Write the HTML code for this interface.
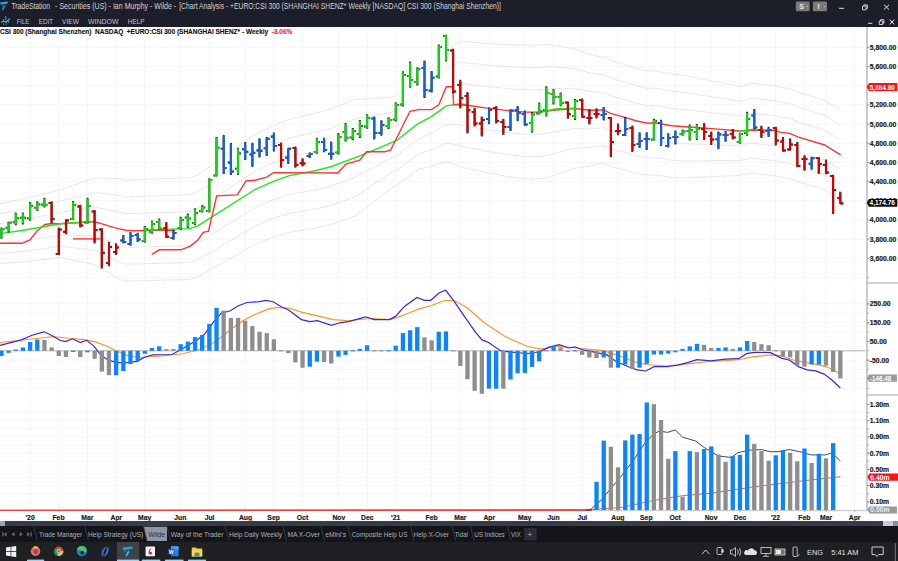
<!DOCTYPE html><html><head><meta charset="utf-8"><style>
html,body{margin:0;padding:0;width:898px;height:561px;overflow:hidden;background:#fff}
svg{display:block;position:absolute;left:0;top:0}
text{font-family:"Liberation Sans",sans-serif}
</style></head><body>
<svg width="898" height="561" viewBox="0 0 898 561">

<rect x="0" y="0" width="898" height="27" fill="#1c1e29"/>
<path d="M0.2,2.2 L8.4,1.5 Q8,3.6 6,4.2 L0.6,4.6 Z" fill="#1c9fe6"/><path d="M4.6,5 Q5.6,7.5 2,11.2 Q2.2,8 4.6,5 Z" fill="#22c3e6"/><path d="M0.6,4.6 Q2,6 2.3,7.2 L3,6 Z" fill="#1a8fd8"/>
<text x="11.4" y="8.8" font-size="8.3" fill="#d4d4da" textLength="38.7" lengthAdjust="spacingAndGlyphs">TradeStation</text>
<text x="55.1" y="8.8" font-size="8.3" fill="#d4d4da" textLength="121.1" lengthAdjust="spacingAndGlyphs">- Securities (US) - Ian Murphy - Wilde -</text>
<text x="179.2" y="8.8" font-size="8.3" fill="#d4d4da" textLength="167.1" lengthAdjust="spacingAndGlyphs">[Chart Analysis - +EURO:CSI 300 (SHANGHAI SHENZ*</text>
<text x="348.6" y="8.8" font-size="8.3" fill="#d4d4da" textLength="152.4" lengthAdjust="spacingAndGlyphs">Weekly [NASDAQ] CSI 300 (Shanghai Shenzhen)]</text>
<path d="M5.8,16 V20.5 M3.3,19.3 v1.6 M8.6,21 v1.6 M3.6,23.4 v1.3 M6,23.5 v1.3" stroke="#1e8fe0" stroke-width="1.3"/><path d="M1.2,22.6 L3.6,21.2 L6,22.2 L9.8,18.6" stroke="#3fd0a0" stroke-width="1.2" fill="none"/>
<text x="16.7" y="24.1" font-size="8.1" fill="#c4c4ca" textLength="12.5" lengthAdjust="spacingAndGlyphs">FILE</text>
<text x="38.8" y="24.1" font-size="8.1" fill="#c4c4ca" textLength="14.3" lengthAdjust="spacingAndGlyphs">EDIT</text>
<text x="62.1" y="24.1" font-size="8.1" fill="#c4c4ca" textLength="16.7" lengthAdjust="spacingAndGlyphs">VIEW</text>
<text x="88" y="24.1" font-size="8.1" fill="#c4c4ca" textLength="30.6" lengthAdjust="spacingAndGlyphs">WINDOW</text>
<text x="127.8" y="24.1" font-size="8.1" fill="#c4c4ca" textLength="16.7" lengthAdjust="spacingAndGlyphs">HELP</text>
<rect x="795.8" y="1.6" width="13.8" height="9.6" rx="1" fill="#7a7a7a"/><text x="799.3" y="9.2" font-size="7" font-weight="bold" fill="#e8e8e8">S</text><circle cx="807.3" cy="6.4" r="0.5" fill="#ddd"/>
<rect x="812.9" y="1.6" width="14.1" height="9.6" rx="1" fill="#7a7a7a"/><text x="817.5" y="9.2" font-size="7" font-weight="bold" fill="#e8e8e8">I</text><circle cx="824.6" cy="6.4" r="0.5" fill="#ddd"/>
<path d="M839,8.3 H844" stroke="#e0e0e0" stroke-width="1"/>
<path d="M862.5,6.2 h3.6 v3.6 h-3.6 z M863.8,6.2 v-1.3 h3.6 v3.6 h-1.3" stroke="#e0e0e0" stroke-width="0.9" fill="none"/>
<path d="M884,4.8 L889,9.6 M889,4.8 L884,9.6" stroke="#e8e8e8" stroke-width="1"/>
<path d="M868,23.3 H872.3" stroke="#e0e0e0" stroke-width="1"/>
<path d="M879.3,21 h3.4 v3.5 h-3.4 z M880.5,21 v-1.3 h3.4 v3.5 h-1.2" stroke="#e0e0e0" stroke-width="0.9" fill="none"/>
<path d="M889.8,19.6 L894.3,24.4 M894.3,19.6 L889.8,24.4" stroke="#e8e8e8" stroke-width="1"/>
<rect x="0" y="27" width="898" height="494" fill="#ffffff"/>
<line x1="30.1" y1="28" x2="30.1" y2="282" stroke="#f6f6f6" stroke-width="1"/>
<line x1="30.1" y1="290" x2="30.1" y2="394" stroke="#f6f6f6" stroke-width="1"/>
<line x1="30.1" y1="402" x2="30.1" y2="510" stroke="#f6f6f6" stroke-width="1"/>
<line x1="58.5" y1="28" x2="58.5" y2="282" stroke="#f6f6f6" stroke-width="1"/>
<line x1="58.5" y1="290" x2="58.5" y2="394" stroke="#f6f6f6" stroke-width="1"/>
<line x1="58.5" y1="402" x2="58.5" y2="510" stroke="#f6f6f6" stroke-width="1"/>
<line x1="87.4" y1="28" x2="87.4" y2="282" stroke="#f6f6f6" stroke-width="1"/>
<line x1="87.4" y1="290" x2="87.4" y2="394" stroke="#f6f6f6" stroke-width="1"/>
<line x1="87.4" y1="402" x2="87.4" y2="510" stroke="#f6f6f6" stroke-width="1"/>
<line x1="116.4" y1="28" x2="116.4" y2="282" stroke="#f6f6f6" stroke-width="1"/>
<line x1="116.4" y1="290" x2="116.4" y2="394" stroke="#f6f6f6" stroke-width="1"/>
<line x1="116.4" y1="402" x2="116.4" y2="510" stroke="#f6f6f6" stroke-width="1"/>
<line x1="144.6" y1="28" x2="144.6" y2="282" stroke="#f6f6f6" stroke-width="1"/>
<line x1="144.6" y1="290" x2="144.6" y2="394" stroke="#f6f6f6" stroke-width="1"/>
<line x1="144.6" y1="402" x2="144.6" y2="510" stroke="#f6f6f6" stroke-width="1"/>
<line x1="180.4" y1="28" x2="180.4" y2="282" stroke="#f6f6f6" stroke-width="1"/>
<line x1="180.4" y1="290" x2="180.4" y2="394" stroke="#f6f6f6" stroke-width="1"/>
<line x1="180.4" y1="402" x2="180.4" y2="510" stroke="#f6f6f6" stroke-width="1"/>
<line x1="209.6" y1="28" x2="209.6" y2="282" stroke="#f6f6f6" stroke-width="1"/>
<line x1="209.6" y1="290" x2="209.6" y2="394" stroke="#f6f6f6" stroke-width="1"/>
<line x1="209.6" y1="402" x2="209.6" y2="510" stroke="#f6f6f6" stroke-width="1"/>
<line x1="245.5" y1="28" x2="245.5" y2="282" stroke="#f6f6f6" stroke-width="1"/>
<line x1="245.5" y1="290" x2="245.5" y2="394" stroke="#f6f6f6" stroke-width="1"/>
<line x1="245.5" y1="402" x2="245.5" y2="510" stroke="#f6f6f6" stroke-width="1"/>
<line x1="273.6" y1="28" x2="273.6" y2="282" stroke="#f6f6f6" stroke-width="1"/>
<line x1="273.6" y1="290" x2="273.6" y2="394" stroke="#f6f6f6" stroke-width="1"/>
<line x1="273.6" y1="402" x2="273.6" y2="510" stroke="#f6f6f6" stroke-width="1"/>
<line x1="302.5" y1="28" x2="302.5" y2="282" stroke="#f6f6f6" stroke-width="1"/>
<line x1="302.5" y1="290" x2="302.5" y2="394" stroke="#f6f6f6" stroke-width="1"/>
<line x1="302.5" y1="402" x2="302.5" y2="510" stroke="#f6f6f6" stroke-width="1"/>
<line x1="338.8" y1="28" x2="338.8" y2="282" stroke="#f6f6f6" stroke-width="1"/>
<line x1="338.8" y1="290" x2="338.8" y2="394" stroke="#f6f6f6" stroke-width="1"/>
<line x1="338.8" y1="402" x2="338.8" y2="510" stroke="#f6f6f6" stroke-width="1"/>
<line x1="367.3" y1="28" x2="367.3" y2="282" stroke="#f6f6f6" stroke-width="1"/>
<line x1="367.3" y1="290" x2="367.3" y2="394" stroke="#f6f6f6" stroke-width="1"/>
<line x1="367.3" y1="402" x2="367.3" y2="510" stroke="#f6f6f6" stroke-width="1"/>
<line x1="395.7" y1="28" x2="395.7" y2="282" stroke="#f6f6f6" stroke-width="1"/>
<line x1="395.7" y1="290" x2="395.7" y2="394" stroke="#f6f6f6" stroke-width="1"/>
<line x1="395.7" y1="402" x2="395.7" y2="510" stroke="#f6f6f6" stroke-width="1"/>
<line x1="431.6" y1="28" x2="431.6" y2="282" stroke="#f6f6f6" stroke-width="1"/>
<line x1="431.6" y1="290" x2="431.6" y2="394" stroke="#f6f6f6" stroke-width="1"/>
<line x1="431.6" y1="402" x2="431.6" y2="510" stroke="#f6f6f6" stroke-width="1"/>
<line x1="460.4" y1="28" x2="460.4" y2="282" stroke="#f6f6f6" stroke-width="1"/>
<line x1="460.4" y1="290" x2="460.4" y2="394" stroke="#f6f6f6" stroke-width="1"/>
<line x1="460.4" y1="402" x2="460.4" y2="510" stroke="#f6f6f6" stroke-width="1"/>
<line x1="489.3" y1="28" x2="489.3" y2="282" stroke="#f6f6f6" stroke-width="1"/>
<line x1="489.3" y1="290" x2="489.3" y2="394" stroke="#f6f6f6" stroke-width="1"/>
<line x1="489.3" y1="402" x2="489.3" y2="510" stroke="#f6f6f6" stroke-width="1"/>
<line x1="524.7" y1="28" x2="524.7" y2="282" stroke="#f6f6f6" stroke-width="1"/>
<line x1="524.7" y1="290" x2="524.7" y2="394" stroke="#f6f6f6" stroke-width="1"/>
<line x1="524.7" y1="402" x2="524.7" y2="510" stroke="#f6f6f6" stroke-width="1"/>
<line x1="553.6" y1="28" x2="553.6" y2="282" stroke="#f6f6f6" stroke-width="1"/>
<line x1="553.6" y1="290" x2="553.6" y2="394" stroke="#f6f6f6" stroke-width="1"/>
<line x1="553.6" y1="402" x2="553.6" y2="510" stroke="#f6f6f6" stroke-width="1"/>
<line x1="582.3" y1="28" x2="582.3" y2="282" stroke="#f6f6f6" stroke-width="1"/>
<line x1="582.3" y1="290" x2="582.3" y2="394" stroke="#f6f6f6" stroke-width="1"/>
<line x1="582.3" y1="402" x2="582.3" y2="510" stroke="#f6f6f6" stroke-width="1"/>
<line x1="617.9" y1="28" x2="617.9" y2="282" stroke="#f6f6f6" stroke-width="1"/>
<line x1="617.9" y1="290" x2="617.9" y2="394" stroke="#f6f6f6" stroke-width="1"/>
<line x1="617.9" y1="402" x2="617.9" y2="510" stroke="#f6f6f6" stroke-width="1"/>
<line x1="646.3" y1="28" x2="646.3" y2="282" stroke="#f6f6f6" stroke-width="1"/>
<line x1="646.3" y1="290" x2="646.3" y2="394" stroke="#f6f6f6" stroke-width="1"/>
<line x1="646.3" y1="402" x2="646.3" y2="510" stroke="#f6f6f6" stroke-width="1"/>
<line x1="675.2" y1="28" x2="675.2" y2="282" stroke="#f6f6f6" stroke-width="1"/>
<line x1="675.2" y1="290" x2="675.2" y2="394" stroke="#f6f6f6" stroke-width="1"/>
<line x1="675.2" y1="402" x2="675.2" y2="510" stroke="#f6f6f6" stroke-width="1"/>
<line x1="711.1" y1="28" x2="711.1" y2="282" stroke="#f6f6f6" stroke-width="1"/>
<line x1="711.1" y1="290" x2="711.1" y2="394" stroke="#f6f6f6" stroke-width="1"/>
<line x1="711.1" y1="402" x2="711.1" y2="510" stroke="#f6f6f6" stroke-width="1"/>
<line x1="740" y1="28" x2="740" y2="282" stroke="#f6f6f6" stroke-width="1"/>
<line x1="740" y1="290" x2="740" y2="394" stroke="#f6f6f6" stroke-width="1"/>
<line x1="740" y1="402" x2="740" y2="510" stroke="#f6f6f6" stroke-width="1"/>
<line x1="775.5" y1="28" x2="775.5" y2="282" stroke="#f6f6f6" stroke-width="1"/>
<line x1="775.5" y1="290" x2="775.5" y2="394" stroke="#f6f6f6" stroke-width="1"/>
<line x1="775.5" y1="402" x2="775.5" y2="510" stroke="#f6f6f6" stroke-width="1"/>
<line x1="804.4" y1="28" x2="804.4" y2="282" stroke="#f6f6f6" stroke-width="1"/>
<line x1="804.4" y1="290" x2="804.4" y2="394" stroke="#f6f6f6" stroke-width="1"/>
<line x1="804.4" y1="402" x2="804.4" y2="510" stroke="#f6f6f6" stroke-width="1"/>
<line x1="826.1" y1="28" x2="826.1" y2="282" stroke="#f6f6f6" stroke-width="1"/>
<line x1="826.1" y1="290" x2="826.1" y2="394" stroke="#f6f6f6" stroke-width="1"/>
<line x1="826.1" y1="402" x2="826.1" y2="510" stroke="#f6f6f6" stroke-width="1"/>
<line x1="854.6" y1="28" x2="854.6" y2="282" stroke="#f6f6f6" stroke-width="1"/>
<line x1="854.6" y1="290" x2="854.6" y2="394" stroke="#f6f6f6" stroke-width="1"/>
<line x1="854.6" y1="402" x2="854.6" y2="510" stroke="#f6f6f6" stroke-width="1"/>
<line x1="0" y1="28.2" x2="866" y2="28.2" stroke="#f6f6f6" stroke-width="1"/>
<line x1="0" y1="47.4" x2="866" y2="47.4" stroke="#f6f6f6" stroke-width="1"/>
<line x1="0" y1="66.6" x2="866" y2="66.6" stroke="#f6f6f6" stroke-width="1"/>
<line x1="0" y1="85.8" x2="866" y2="85.8" stroke="#f6f6f6" stroke-width="1"/>
<line x1="0" y1="104.9" x2="866" y2="104.9" stroke="#f6f6f6" stroke-width="1"/>
<line x1="0" y1="124.1" x2="866" y2="124.1" stroke="#f6f6f6" stroke-width="1"/>
<line x1="0" y1="143.3" x2="866" y2="143.3" stroke="#f6f6f6" stroke-width="1"/>
<line x1="0" y1="162.5" x2="866" y2="162.5" stroke="#f6f6f6" stroke-width="1"/>
<line x1="0" y1="181.7" x2="866" y2="181.7" stroke="#f6f6f6" stroke-width="1"/>
<line x1="0" y1="200.8" x2="866" y2="200.8" stroke="#f6f6f6" stroke-width="1"/>
<line x1="0" y1="220" x2="866" y2="220" stroke="#f6f6f6" stroke-width="1"/>
<line x1="0" y1="239.2" x2="866" y2="239.2" stroke="#f6f6f6" stroke-width="1"/>
<line x1="0" y1="258.4" x2="866" y2="258.4" stroke="#f6f6f6" stroke-width="1"/>
<line x1="0" y1="277.6" x2="866" y2="277.6" stroke="#f6f6f6" stroke-width="1"/>
<line x1="0" y1="388.4" x2="866" y2="388.4" stroke="#f6f6f6" stroke-width="1"/>
<line x1="0" y1="379" x2="866" y2="379" stroke="#f6f6f6" stroke-width="1"/>
<line x1="0" y1="369.6" x2="866" y2="369.6" stroke="#f6f6f6" stroke-width="1"/>
<line x1="0" y1="360.2" x2="866" y2="360.2" stroke="#f6f6f6" stroke-width="1"/>
<line x1="0" y1="341.4" x2="866" y2="341.4" stroke="#f6f6f6" stroke-width="1"/>
<line x1="0" y1="332" x2="866" y2="332" stroke="#f6f6f6" stroke-width="1"/>
<line x1="0" y1="322.6" x2="866" y2="322.6" stroke="#f6f6f6" stroke-width="1"/>
<line x1="0" y1="313.2" x2="866" y2="313.2" stroke="#f6f6f6" stroke-width="1"/>
<line x1="0" y1="303.8" x2="866" y2="303.8" stroke="#f6f6f6" stroke-width="1"/>
<line x1="0" y1="501.9" x2="866" y2="501.9" stroke="#f6f6f6" stroke-width="1"/>
<line x1="0" y1="493.8" x2="866" y2="493.8" stroke="#f6f6f6" stroke-width="1"/>
<line x1="0" y1="485.6" x2="866" y2="485.6" stroke="#f6f6f6" stroke-width="1"/>
<line x1="0" y1="477.5" x2="866" y2="477.5" stroke="#f6f6f6" stroke-width="1"/>
<line x1="0" y1="469.4" x2="866" y2="469.4" stroke="#f6f6f6" stroke-width="1"/>
<line x1="0" y1="461.2" x2="866" y2="461.2" stroke="#f6f6f6" stroke-width="1"/>
<line x1="0" y1="453.1" x2="866" y2="453.1" stroke="#f6f6f6" stroke-width="1"/>
<line x1="0" y1="445" x2="866" y2="445" stroke="#f6f6f6" stroke-width="1"/>
<line x1="0" y1="436.9" x2="866" y2="436.9" stroke="#f6f6f6" stroke-width="1"/>
<line x1="0" y1="428.8" x2="866" y2="428.8" stroke="#f6f6f6" stroke-width="1"/>
<line x1="0" y1="420.6" x2="866" y2="420.6" stroke="#f6f6f6" stroke-width="1"/>
<line x1="0" y1="412.5" x2="866" y2="412.5" stroke="#f6f6f6" stroke-width="1"/>
<polyline points="0,203.6 4,202.8 8,202 12,201.1 16,200.3 20,199.5 24,198.6 28,197.6 32,196.7 36,195.7 40,194.8 44,193.8 48,192.8 52,191.8 56,190.8 60,189.8 64,188.5 68,187.1 72,185.8 76,184.4 80,183.1 84,181.7 88,180.4 92,179 96,178.1 100,178.2 104,178.3 108,178.4 112,178.5 116,178.6 120,178.7 124,179.9 128,180 132,179.9 136,179.7 140,179.6 144,179.4 148,179.3 152,179.1 156,179 160,178.8 164,178.7 168,178.5 172,178.4 176,178.2 180,178.1 184,177.9 188,177.8 192,177 196,175.6 200,173.5 204,170.6 208,167.8 212,164.9 216,162.1 220,159.2 224,156.4 228,153.5 232,150.7 236,147.9 240,145 244,142.3 248,139.5 252,136.8 256,134.3 260,132.3 264,130.3 268,128.4 272,126.4 276,124.7 280,123 284,121.4 288,119.7 292,118.5 296,117.6 300,116.6 304,115.8 308,114.9 312,114 316,113.1 320,112 324,110.9 328,109.8 332,108.5 336,106.8 340,105.2 344,103.6 348,102 352,100.4 356,99.2 360,99.2 364,99 368,98.9 372,98.7 376,98.4 380,98.2 384,97.8 388,97.4 392,97 396,95.5 400,92.6 404,89.3 408,86 412,82.7 416,79.4 420,76.8 424,73.2 428,69.6 432,65.9 436,61.7 440,57.4 444,53.1 448,49.6 452,46.6 456,43.7 460,40.8 464,41.3 468,41.9 472,42.2 476,42.6 480,42.9 484,43.3 488,43.5 492,43.8 496,44 500,44.2 504,44.5 508,44.7 512,44.8 516,44.9 520,45.1 524,45.2 528,45.2 532,45.3 536,45.3 540,45.3 544,44.8 548,44.6 552,45.1 556,45.6 560,46.3 564,47 568,47.7 572,48.3 576,49.3 580,50.8 584,52.2 588,53.7 592,54.9 596,55.8 600,56.7 604,56.9 608,59 612,60.7 616,61.9 620,63.1 624,64.3 628,65.6 632,66.9 636,68.2 640,69.2 644,70.1 648,71 652,70.9 656,71 660,71.8 664,72.6 668,73.4 672,74.1 676,74.5 680,74.9 684,75.3 688,76 692,76.8 696,77.6 700,78.4 704,79.2 708,80 712,80.8 716,81.6 720,82.4 724,83.3 728,84.1 732,84.9 736,85.8 740,86.5 744,85.4 748,84.3 752,83.2 756,83.8 760,84.3 764,84.7 768,85.1 772,85.4 776,86 780,87.2 784,87.8 788,88.4 792,89.6 796,91.4 800,92.9 804,94.1 808,95.3 812,96.6 816,97.8 820,99.1 824,100.3 828,102.6 832,105.1 836,107.6 840,110 840.6,110.4" fill="none" stroke="#d2d2d2" stroke-width="0.9" stroke-dasharray="1.2,0.9"/>
<polyline points="0,213.6 4,212.9 8,212.1 12,211.4 16,210.7 20,209.9 24,209.1 28,208.2 32,207.4 36,206.5 40,205.6 44,204.8 48,203.9 52,202.9 56,202 60,201.1 64,200.1 68,199.1 72,198.1 76,197.2 80,196.2 84,195.2 88,194.2 92,193.2 96,192.7 100,193.1 104,193.6 108,194.1 112,194.5 116,195 120,195.5 124,196.7 128,196.9 132,196.7 136,196.6 140,196.4 144,196.3 148,196.1 152,196 156,195.9 160,195.7 164,195.6 168,195.4 172,195.3 176,195.1 180,195 184,194.9 188,194.7 192,193.9 196,192.5 200,190.5 204,187.7 208,185 212,182.2 216,179.5 220,176.7 224,174 228,171.2 232,168.5 236,165.8 240,163 244,160.4 248,157.7 252,155 256,152.5 260,150.6 264,148.7 268,146.8 272,144.9 276,143.3 280,141.7 284,140.1 288,138.5 292,137.4 296,136.5 300,135.6 304,134.8 308,134 312,133.1 316,132.3 320,131.2 324,130.1 328,129 332,127.7 336,126.2 340,124.6 344,123 348,121.4 352,119.9 356,118.5 360,118 364,117.4 368,116.8 372,116.1 376,115.4 380,114.6 384,113.8 388,113 392,112.1 396,110.6 400,107.7 404,104.4 408,101.2 412,97.9 416,94.7 420,92.1 424,89 428,85.9 432,82.7 436,78.9 440,75.1 444,71.3 448,68.3 452,66.1 456,64 460,61.8 464,62.4 468,63 472,63.4 476,63.9 480,64.3 484,64.7 488,65.1 492,65.4 496,65.7 500,66 504,66.4 508,66.7 512,66.9 516,67.1 520,67.3 524,67.5 528,67.5 532,67.6 536,67.6 540,67.5 544,67.1 548,66.8 552,66.9 556,67.1 560,67.4 564,67.8 568,68.1 572,68.5 576,69.1 580,70.2 584,71.3 588,72.5 592,73.3 596,73.9 600,74.5 604,74.6 608,76.7 612,78.4 616,79.6 620,80.7 624,81.9 628,83.2 632,84.5 636,85.7 640,86.6 644,87.5 648,88.4 652,88.2 656,88.3 660,89.1 664,89.8 668,90.6 672,91.3 676,91.7 680,92.1 684,92.4 688,93 692,93.6 696,94.3 700,94.9 704,95.5 708,96.1 712,96.7 716,97.4 720,98.1 724,98.7 728,99.4 732,100.1 736,100.8 740,101.3 744,100.3 748,99.2 752,98.2 756,98.7 760,99.3 764,99.7 768,100 772,100.4 776,100.9 780,102.2 784,102.8 788,103.3 792,104.5 796,106.3 800,107.8 804,109 808,110.2 812,111.5 816,112.7 820,113.9 824,115.1 828,117.4 832,119.9 836,122.4 840,124.8 840.6,125.2" fill="none" stroke="#d2d2d2" stroke-width="0.9" stroke-dasharray="1.2,0.9"/>
<polyline points="0,223.6 4,222.9 8,222.3 12,221.6 16,221 20,220.3 24,219.6 28,218.8 32,218.1 36,217.3 40,216.5 44,215.7 48,214.9 52,214.1 56,213.2 60,212.4 64,211.8 68,211.1 72,210.5 76,209.9 80,209.3 84,208.6 88,208 92,207.4 96,207.2 100,208.1 104,208.9 108,209.8 112,210.6 116,211.4 120,212.3 124,213.5 128,213.7 132,213.6 136,213.4 140,213.3 144,213.1 148,213 152,212.9 156,212.7 160,212.6 164,212.5 168,212.4 172,212.2 176,212.1 180,212 184,211.8 188,211.7 192,210.9 196,209.5 200,207.5 204,204.8 208,202.2 212,199.5 216,196.9 220,194.2 224,191.6 228,188.9 232,186.3 236,183.7 240,181 244,178.4 248,175.8 252,173.2 256,170.8 260,169 264,167.1 268,165.3 272,163.5 276,161.9 280,160.4 284,158.8 288,157.3 292,156.2 296,155.4 300,154.6 304,153.8 308,153 312,152.3 316,151.4 320,150.4 324,149.3 328,148.3 332,147 336,145.5 340,143.9 344,142.4 348,140.9 352,139.3 356,137.9 360,136.9 364,135.8 368,134.6 372,133.5 376,132.3 380,131.1 384,129.8 388,128.5 392,127.3 396,125.6 400,122.8 404,119.6 408,116.4 412,113.2 416,109.9 420,107.4 424,104.8 428,102.1 432,99.4 436,96.1 440,92.7 444,89.4 448,86.9 452,85.6 456,84.2 460,82.8 464,83.5 468,84.2 472,84.7 476,85.2 480,85.7 484,86.2 488,86.7 492,87.1 496,87.5 500,87.8 504,88.2 508,88.6 512,88.9 516,89.2 520,89.5 524,89.7 528,89.8 532,89.8 536,89.8 540,89.7 544,89.3 548,88.9 552,88.7 556,88.5 560,88.6 564,88.6 568,88.6 572,88.6 576,88.9 580,89.7 584,90.5 588,91.3 592,91.8 596,92 600,92.3 604,92.4 608,94.4 612,96.1 616,97.3 620,98.4 624,99.5 628,100.7 632,102 636,103.2 640,104.1 644,105 648,105.8 652,105.6 656,105.6 660,106.4 664,107.1 668,107.9 672,108.5 676,108.9 680,109.2 684,109.5 688,110 692,110.4 696,110.9 700,111.3 704,111.8 708,112.3 712,112.7 716,113.2 720,113.7 724,114.2 728,114.7 732,115.2 736,115.7 740,116.1 744,115.1 748,114.1 752,113.1 756,113.7 760,114.3 764,114.7 768,115 772,115.3 776,115.9 780,117.1 784,117.7 788,118.2 792,119.4 796,121.2 800,122.7 804,123.9 808,125.1 812,126.3 816,127.5 820,128.8 824,130 828,132.3 832,134.7 836,137.2 840,139.6 840.6,140" fill="none" stroke="#d2d2d2" stroke-width="0.9" stroke-dasharray="1.2,0.9"/>
<polyline points="0,243.6 4,243.1 8,242.6 12,242.2 16,241.7 20,241.2 24,240.7 28,240.1 32,239.5 36,238.8 40,238.2 44,237.6 48,237 52,236.3 56,235.7 60,235 64,235.1 68,235.2 72,235.3 76,235.4 80,235.5 84,235.6 88,235.7 92,235.8 96,236.4 100,237.9 104,239.5 108,241.1 112,242.7 116,244.3 120,245.9 124,247.1 128,247.3 132,247.2 136,247.1 140,247 144,246.9 148,246.8 152,246.6 156,246.5 160,246.4 164,246.3 168,246.2 172,246.1 176,246 180,245.9 184,245.7 188,245.6 192,244.9 196,243.5 200,241.5 204,239 208,236.6 212,234.1 216,231.7 220,229.2 224,226.8 228,224.3 232,221.9 236,219.5 240,217 244,214.6 248,212.1 252,209.6 256,207.3 260,205.6 264,203.9 268,202.2 272,200.5 276,199.1 280,197.7 284,196.3 288,194.9 292,194 296,193.3 300,192.6 304,191.9 308,191.2 312,190.5 316,189.7 320,188.7 324,187.8 328,186.8 332,185.6 336,184.1 340,182.7 344,181.2 348,179.7 352,178.3 356,176.7 360,174.7 364,172.5 368,170.4 372,168.3 376,166.2 380,164.1 384,161.9 388,159.7 392,157.5 396,155.7 400,152.9 404,149.8 408,146.7 412,143.6 416,140.5 420,138 424,136.3 428,134.6 432,132.8 436,130.4 440,128.1 444,125.7 448,124.3 452,124.5 456,124.6 460,124.8 464,125.7 468,126.5 472,127.2 476,127.8 480,128.5 484,129.2 488,129.8 492,130.3 496,130.9 500,131.4 504,132 508,132.6 512,133 516,133.4 520,133.9 524,134.3 528,134.4 532,134.4 536,134.3 540,134.2 544,133.7 548,133.1 552,132.3 556,131.5 560,130.8 564,130.1 568,129.5 572,128.8 576,128.5 580,128.6 584,128.7 588,128.9 592,128.7 596,128.3 600,127.9 604,127.9 608,129.9 612,131.5 616,132.6 620,133.6 624,134.7 628,135.9 632,137.1 636,138.2 640,139 644,139.8 648,140.6 652,140.3 656,140.3 660,141 664,141.7 668,142.3 672,143 676,143.2 680,143.5 684,143.8 688,143.9 692,144 696,144.2 700,144.3 704,144.4 708,144.5 712,144.7 716,144.8 720,145 724,145.1 728,145.3 732,145.5 736,145.7 740,145.7 744,144.8 748,143.8 752,142.9 756,143.6 760,144.3 764,144.7 768,145 772,145.3 776,145.8 780,147 784,147.6 788,148.1 792,149.3 796,151 800,152.5 804,153.7 808,154.9 812,156.1 816,157.3 820,158.5 824,159.7 828,161.9 832,164.4 836,166.8 840,169.2 840.6,169.6" fill="none" stroke="#d2d2d2" stroke-width="0.9" stroke-dasharray="1.2,0.9"/>
<polyline points="0,253.6 4,253.2 8,252.8 12,252.4 16,252 20,251.6 24,251.2 28,250.7 32,250.1 36,249.6 40,249.1 44,248.6 48,248 52,247.4 56,246.9 60,246.3 64,246.8 68,247.2 72,247.7 76,248.1 80,248.6 84,249 88,249.5 92,250 96,250.9 100,252.9 104,254.8 108,256.8 112,258.8 116,260.7 120,262.7 124,263.9 128,264.1 132,264 136,263.9 140,263.8 144,263.7 148,263.6 152,263.5 156,263.4 160,263.3 164,263.2 168,263.1 172,263 176,262.9 180,262.8 184,262.7 188,262.6 192,261.9 196,260.5 200,258.5 204,256.1 208,253.8 212,251.4 216,249.1 220,246.7 224,244.4 228,242 232,239.7 236,237.4 240,235 244,232.6 248,230.2 252,227.8 256,225.6 260,224 264,222.3 268,220.7 272,219.1 276,217.7 280,216.4 284,215 288,213.7 292,212.8 296,212.2 300,211.6 304,210.9 308,210.3 312,209.6 316,208.8 320,207.9 324,207 328,206.1 332,204.9 336,203.5 340,202 344,200.6 348,199.2 352,197.7 356,196 360,193.5 364,190.9 368,188.3 372,185.7 376,183.1 380,180.6 384,177.9 388,175.3 392,172.6 396,170.7 400,168 404,164.9 408,161.9 412,158.8 416,155.7 420,153.3 424,152.1 428,150.9 432,149.5 436,147.6 440,145.7 444,143.8 448,143 452,143.9 456,144.9 460,145.8 464,146.7 468,147.7 472,148.4 476,149.2 480,149.9 484,150.7 488,151.3 492,152 496,152.6 500,153.2 504,153.9 508,154.5 512,155 516,155.5 520,156.1 524,156.6 528,156.7 532,156.6 536,156.6 540,156.4 544,155.9 548,155.2 552,154.1 556,152.9 560,151.9 564,150.9 568,149.9 572,149 576,148.3 580,148.1 584,147.9 588,147.7 592,147.2 596,146.4 600,145.7 604,145.7 608,147.7 612,149.2 616,150.3 620,151.3 624,152.3 628,153.4 632,154.6 636,155.7 640,156.5 644,157.3 648,158 652,157.7 656,157.7 660,158.3 664,158.9 668,159.6 672,160.2 676,160.4 680,160.6 684,160.9 688,160.9 692,160.9 696,160.8 700,160.8 704,160.7 708,160.7 712,160.6 716,160.6 720,160.6 724,160.6 728,160.6 732,160.6 736,160.6 740,160.5 744,159.6 748,158.7 752,157.8 756,158.6 760,159.3 764,159.7 768,160 772,160.2 776,160.8 780,162 784,162.5 788,163 792,164.2 796,165.9 800,167.4 804,168.6 808,169.7 812,170.9 816,172.1 820,173.3 824,174.5 828,176.7 832,179.2 836,181.6 840,184 840.6,184.4" fill="none" stroke="#d2d2d2" stroke-width="0.9" stroke-dasharray="1.2,0.9"/>
<polyline points="0,263.6 4,263.3 8,263 12,262.7 16,262.4 20,262.1 24,261.7 28,261.3 32,260.8 36,260.4 40,260 44,259.5 48,259.1 52,258.6 56,258.1 60,257.6 64,258.4 68,259.2 72,260 76,260.9 80,261.7 84,262.5 88,263.3 92,264.1 96,265.5 100,267.8 104,270.1 108,272.5 112,274.8 116,277.1 120,279.5 124,280.7 128,281 132,280.9 136,280.8 140,280.7 144,280.6 148,280.5 152,280.4 156,280.3 160,280.2 164,280.1 168,280 172,279.9 176,279.8 180,279.8 184,279.7 188,279.6 192,278.8 196,277.5 200,275.5 204,273.2 208,271 212,268.7 216,266.5 220,264.2 224,262 228,259.7 232,257.5 236,255.3 240,253 244,250.7 248,248.3 252,246 256,243.9 260,242.3 264,240.7 268,239.2 272,237.6 276,236.3 280,235 284,233.8 288,232.5 292,231.7 296,231.2 300,230.6 304,230 308,229.3 312,228.7 316,228 320,227.1 324,226.2 328,225.3 332,224.2 336,222.8 340,221.4 344,220 348,218.6 352,217.2 356,215.4 360,212.4 364,209.3 368,206.1 372,203 376,200 380,197 384,193.9 388,190.8 392,187.7 396,185.7 400,183.1 404,180 408,177 412,174 416,171 420,168.6 424,167.9 428,167.1 432,166.3 436,164.8 440,163.4 444,162 448,161.7 452,163.4 456,165.1 460,166.8 464,167.8 468,168.8 472,169.6 476,170.5 480,171.3 484,172.1 488,172.9 492,173.6 496,174.3 500,175 504,175.8 508,176.5 512,177.1 516,177.7 520,178.3 524,178.9 528,179 532,178.9 536,178.8 540,178.7 544,178.1 548,177.3 552,175.8 556,174.4 560,173 564,171.7 568,170.4 572,169.1 576,168.1 580,167.5 584,167 588,166.5 592,165.6 596,164.6 600,163.5 604,163.5 608,165.4 612,166.9 616,167.9 620,168.9 624,169.9 628,171 632,172.1 636,173.3 640,174 644,174.7 648,175.4 652,175.1 656,175 660,175.6 664,176.2 668,176.8 672,177.4 676,177.6 680,177.8 684,178 688,177.9 692,177.7 696,177.5 700,177.2 704,177 708,176.8 712,176.6 716,176.4 720,176.2 724,176.1 728,175.9 732,175.8 736,175.6 740,175.3 744,174.5 748,173.6 752,172.8 756,173.5 760,174.3 764,174.7 768,174.9 772,175.2 776,175.7 780,176.9 784,177.5 788,178 792,179.1 796,180.8 800,182.3 804,183.4 808,184.6 812,185.8 816,187 820,188.2 824,189.3 828,191.6 832,194 836,196.4 840,198.8 840.6,199.2" fill="none" stroke="#d2d2d2" stroke-width="0.9" stroke-dasharray="1.2,0.9"/>
<polyline points="0,243.3 22,243.3 30,240 37,231 45,224.5 52,223.5 60,223.7 94.7,221.8" fill="none" stroke="#ff3434" stroke-width="1.4"/>
<polyline points="72.9,238.9 100.5,238.9" fill="none" stroke="#ff3434" stroke-width="1.4"/>
<polyline points="94.7,221.8 102,223.8 110,226.3 118,228.6 126,230.2 134,230.8 146,230.5 175,230.4" fill="none" stroke="#ff3434" stroke-width="1.4"/>
<polyline points="0,233.6 22,230.5 45,226.5 60,223.7 94.7,221.4" fill="none" stroke="#1ee81e" stroke-width="1.4"/>
<polyline points="144.2,230 190,228.6 197.8,225.9 212.8,216.3 255,189.5 272.7,181.7 289.4,175.6 315,170.8 330.2,167 360.5,155.6 380,147.6 397,140.2 417.4,124.1 431.3,116.6 446.3,105.9 460,103.8 467,104.8" fill="none" stroke="#1ee81e" stroke-width="1.4"/>
<polyline points="151.8,254.4 159.4,249.8 180.6,249.8 190,246.4 197.8,240 203.2,232.3 208.5,231.2 216.7,195.9 237.4,194.9 246,181 255,180.3 266.7,177.1 273.5,172.6 337.7,173 346,164 359.7,160.2 366.5,151.8 385,151.8 390.7,150 410,111.3 418.5,109.6 431.3,109.6 438.8,104.9 446.3,86.7 452.7,86.7 453.6,104.5 467.1,105.2 485.3,107.9 508,110.6 525,112.1 539,112.1 556,110 574.5,108.5 590,110.3 603.7,110 610.4,113.4 625.1,117.4 635.8,120.7 647.8,123.2 655,122.8 671.4,125.7 692.8,127.3 715,128.9 739.6,131 761,130 774.9,130.5 780,132.1 789.8,133.4 797.8,136.9 824.6,145 840.6,154.8" fill="none" stroke="#ff3434" stroke-width="1.4"/>
<polyline points="539,112.1 545.8,111 556.4,108.8 567,108.5 574.5,108.2" fill="none" stroke="#1ee81e" stroke-width="1.4"/>
<polyline points="739.6,131 754.6,129.1 761,130.5" fill="none" stroke="#1ee81e" stroke-width="1.4"/>
<path d="M1.4,227.4 V238.8 M-1.7,236 H1.4 M1.4,229.1 H4.5" stroke="#1a1a1a" stroke-width="2.1" fill="none" opacity="0.85"/>
<path d="M1.4,228.5 V237.7 M-1,236 H1.4 M1.4,229.1 H3.8" stroke="#10d810" stroke-width="2.1" fill="none"/>
<path d="M8.6,221.8 V232.4 M5.5,227.9 H8.6 M8.6,222.7 H11.7" stroke="#1a1a1a" stroke-width="2.1" fill="none" opacity="0.85"/>
<path d="M8.6,222.9 V231.3 M6.2,227.9 H8.6 M8.6,222.7 H11" stroke="#10d810" stroke-width="2.1" fill="none"/>
<path d="M15.8,212.5 V225.2 M12.7,222.3 H15.8 M15.8,218.3 H18.9" stroke="#1a1a1a" stroke-width="2.1" fill="none" opacity="0.85"/>
<path d="M15.8,213.6 V224.1 M13.4,222.3 H15.8 M15.8,218.3 H18.2" stroke="#10d810" stroke-width="2.1" fill="none"/>
<path d="M22.9,212.5 V224.4 M19.8,217.9 H22.9 M22.9,217.9 H26" stroke="#1a1a1a" stroke-width="2.1" fill="none" opacity="0.85"/>
<path d="M22.9,213.6 V223.3 M20.5,217.9 H22.9 M22.9,217.9 H25.3" stroke="#10d810" stroke-width="2.1" fill="none"/>
<path d="M30.1,202.1 V220.8 M27,218.3 H30.1 M30.1,205.8 H33.2" stroke="#1a1a1a" stroke-width="2.1" fill="none" opacity="0.85"/>
<path d="M30.1,203.2 V219.7 M27.7,218.3 H30.1 M30.1,205.8 H32.5" stroke="#10d810" stroke-width="2.1" fill="none"/>
<path d="M37.3,201.3 V211.1 M34.2,207.8 H37.3 M37.3,204.2 H40.4" stroke="#1a1a1a" stroke-width="2.1" fill="none" opacity="0.85"/>
<path d="M37.3,202.4 V210 M34.9,207.8 H37.3 M37.3,204.2 H39.7" stroke="#10d810" stroke-width="2.1" fill="none"/>
<path d="M44.4,197.7 V207.5 M41.3,204.6 H44.4 M44.4,205 H47.5" stroke="#1a1a1a" stroke-width="2.1" fill="none" opacity="0.85"/>
<path d="M44.4,198.8 V206.4 M42,204.6 H44.4 M44.4,205 H46.8" stroke="#10d810" stroke-width="2.1" fill="none"/>
<path d="M51.6,201.3 V223.2 M48.5,203 H51.6 M51.6,219 H54.7" stroke="#1a1a1a" stroke-width="2.1" fill="none" opacity="0.85"/>
<path d="M51.6,202.4 V222.1 M49.2,203 H51.6 M51.6,219 H54" stroke="#d20000" stroke-width="2.1" fill="none"/>
<path d="M58.8,227.4 V254.9 M55.7,254 H58.8 M58.8,229.5 H61.9" stroke="#1a1a1a" stroke-width="2.1" fill="none" opacity="0.85"/>
<path d="M58.8,228.5 V253.8 M56.4,254 H58.8 M58.8,229.5 H61.2" stroke="#d20000" stroke-width="2.1" fill="none"/>
<path d="M66,219.2 V234.3 M62.9,231.8 H66 M66,220.4 H69" stroke="#1a1a1a" stroke-width="2.1" fill="none" opacity="0.85"/>
<path d="M66,220.3 V233.2 M63.6,231.8 H66 M66,220.4 H68.4" stroke="#d20000" stroke-width="2.1" fill="none"/>
<path d="M73.1,200.9 V220 M70,219 H73.1 M73.1,205 H76.2" stroke="#1a1a1a" stroke-width="2.1" fill="none" opacity="0.85"/>
<path d="M73.1,202 V218.9 M70.7,219 H73.1 M73.1,205 H75.5" stroke="#10d810" stroke-width="2.1" fill="none"/>
<path d="M80.3,204.7 V227.6 M77.2,206.5 H80.3 M80.3,225.5 H83.4" stroke="#1a1a1a" stroke-width="2.1" fill="none" opacity="0.85"/>
<path d="M80.3,205.8 V226.5 M77.9,206.5 H80.3 M80.3,225.5 H82.7" stroke="#d20000" stroke-width="2.1" fill="none"/>
<path d="M87.5,197.8 V223.8 M84.4,222.5 H87.5 M87.5,206 H90.6" stroke="#1a1a1a" stroke-width="2.1" fill="none" opacity="0.85"/>
<path d="M87.5,198.9 V222.7 M85.1,222.5 H87.5 M87.5,206 H89.9" stroke="#10d810" stroke-width="2.1" fill="none"/>
<path d="M94.6,210 V243.5 M91.5,211.5 H94.6 M94.6,230 H97.7" stroke="#1a1a1a" stroke-width="2.1" fill="none" opacity="0.85"/>
<path d="M94.6,211.1 V242.4 M92.2,211.5 H94.6 M94.6,230 H97" stroke="#d20000" stroke-width="2.1" fill="none"/>
<path d="M101.8,228.1 V268.5 M98.7,229.5 H101.8 M101.8,252.9 H104.9" stroke="#1a1a1a" stroke-width="2.1" fill="none" opacity="0.85"/>
<path d="M101.8,229.2 V267.4 M99.4,229.5 H101.8 M101.8,252.9 H104.2" stroke="#d20000" stroke-width="2.1" fill="none"/>
<path d="M109,241.8 V266.3 M105.9,263 H109 M109,247 H112.1" stroke="#1a1a1a" stroke-width="2.1" fill="none" opacity="0.85"/>
<path d="M109,242.9 V265.2 M106.6,263 H109 M109,247 H111.4" stroke="#d20000" stroke-width="2.1" fill="none"/>
<path d="M116.1,243.3 V254.9 M113,252 H116.1 M116.1,247.5 H119.2" stroke="#1a1a1a" stroke-width="2.1" fill="none" opacity="0.85"/>
<path d="M116.1,244.4 V253.8 M113.7,252 H116.1 M116.1,247.5 H118.5" stroke="#d20000" stroke-width="2.1" fill="none"/>
<path d="M123.3,235 V243.5 M120.2,240.5 H123.3 M123.3,242 H126.4" stroke="#1a1a1a" stroke-width="2.1" fill="none" opacity="0.85"/>
<path d="M123.3,236.1 V242.4 M120.9,240.5 H123.3 M123.3,242 H125.7" stroke="#1262dc" stroke-width="2.1" fill="none"/>
<path d="M130.5,231.9 V245.8 M127.4,244 H130.5 M130.5,236 H133.6" stroke="#1a1a1a" stroke-width="2.1" fill="none" opacity="0.85"/>
<path d="M130.5,233 V244.7 M128.1,244 H130.5 M130.5,236 H132.9" stroke="#1262dc" stroke-width="2.1" fill="none"/>
<path d="M137.7,232.7 V242 M134.6,235 H137.7 M137.7,239.5 H140.8" stroke="#1a1a1a" stroke-width="2.1" fill="none" opacity="0.85"/>
<path d="M137.7,233.8 V240.9 M135.2,235 H137.7 M137.7,239.5 H140.1" stroke="#1262dc" stroke-width="2.1" fill="none"/>
<path d="M144.8,225.9 V242.8 M141.7,241 H144.8 M144.8,229 H147.9" stroke="#1a1a1a" stroke-width="2.1" fill="none" opacity="0.85"/>
<path d="M144.8,227 V241.7 M142.4,241 H144.8 M144.8,229 H147.2" stroke="#10d810" stroke-width="2.1" fill="none"/>
<path d="M152,220.5 V233.7 M148.9,232 H152 M152,224 H155.1" stroke="#1a1a1a" stroke-width="2.1" fill="none" opacity="0.85"/>
<path d="M152,221.6 V232.6 M149.6,232 H152 M152,224 H154.4" stroke="#10d810" stroke-width="2.1" fill="none"/>
<path d="M159.2,218.5 V229.8 M156.1,222 H159.2 M159.2,228.8 H162.3" stroke="#1a1a1a" stroke-width="2.1" fill="none" opacity="0.85"/>
<path d="M159.2,219.6 V228.7 M156.8,222 H159.2 M159.2,228.8 H161.6" stroke="#10d810" stroke-width="2.1" fill="none"/>
<path d="M166.3,222 V238.1 M163.2,228.3 H166.3 M166.3,236.7 H169.4" stroke="#1a1a1a" stroke-width="2.1" fill="none" opacity="0.85"/>
<path d="M166.3,223.1 V237 M163.9,228.3 H166.3 M166.3,236.7 H168.7" stroke="#d20000" stroke-width="2.1" fill="none"/>
<path d="M173.5,229.7 V239.7 M170.4,238 H173.5 M173.5,233 H176.6" stroke="#1a1a1a" stroke-width="2.1" fill="none" opacity="0.85"/>
<path d="M173.5,230.8 V238.6 M171.1,238 H173.5 M173.5,233 H175.9" stroke="#1262dc" stroke-width="2.1" fill="none"/>
<path d="M180.7,216.8 V229.9 M177.6,228 H180.7 M180.7,220 H183.8" stroke="#1a1a1a" stroke-width="2.1" fill="none" opacity="0.85"/>
<path d="M180.7,217.9 V228.8 M178.3,228 H180.7 M180.7,220 H183.1" stroke="#10d810" stroke-width="2.1" fill="none"/>
<path d="M187.8,213.6 V227.9 M184.7,217.5 H187.8 M187.8,218.5 H190.9" stroke="#1a1a1a" stroke-width="2.1" fill="none" opacity="0.85"/>
<path d="M187.8,214.7 V226.8 M185.4,217.5 H187.8 M187.8,218.5 H190.2" stroke="#10d810" stroke-width="2.1" fill="none"/>
<path d="M195,208.3 V225.3 M191.9,223 H195 M195,213 H198.1" stroke="#1a1a1a" stroke-width="2.1" fill="none" opacity="0.85"/>
<path d="M195,209.4 V224.2 M192.6,223 H195 M195,213 H197.4" stroke="#10d810" stroke-width="2.1" fill="none"/>
<path d="M202.2,205.1 V212.5 M199.1,211 H202.2 M202.2,207.5 H205.3" stroke="#1a1a1a" stroke-width="2.1" fill="none" opacity="0.85"/>
<path d="M202.2,206.2 V211.4 M199.8,211 H202.2 M202.2,207.5 H204.6" stroke="#10d810" stroke-width="2.1" fill="none"/>
<path d="M209.3,178.3 V212.5 M206.2,211 H209.3 M209.3,180 H212.4" stroke="#1a1a1a" stroke-width="2.1" fill="none" opacity="0.85"/>
<path d="M209.3,179.4 V211.4 M206.9,211 H209.3 M209.3,180 H211.8" stroke="#10d810" stroke-width="2.1" fill="none"/>
<path d="M216.5,137 V176.5 M213.4,175.5 H216.5 M216.5,147.9 H219.6" stroke="#1a1a1a" stroke-width="2.1" fill="none" opacity="0.85"/>
<path d="M216.5,138.1 V175.4 M214.1,175.5 H216.5 M216.5,147.9 H218.9" stroke="#10d810" stroke-width="2.1" fill="none"/>
<path d="M223.7,134.9 V174 M220.6,148.8 H223.7 M223.7,168 H226.8" stroke="#1a1a1a" stroke-width="2.1" fill="none" opacity="0.85"/>
<path d="M223.7,136 V172.9 M221.3,148.8 H223.7 M223.7,168 H226.1" stroke="#1262dc" stroke-width="2.1" fill="none"/>
<path d="M230.9,143 V175 M227.8,162.6 H230.9 M230.9,171.5 H234" stroke="#1a1a1a" stroke-width="2.1" fill="none" opacity="0.85"/>
<path d="M230.9,144.1 V173.9 M228.5,162.6 H230.9 M230.9,171.5 H233.3" stroke="#1262dc" stroke-width="2.1" fill="none"/>
<path d="M238,147.7 V175 M234.9,168.8 H238 M238,153.4 H241.1" stroke="#1a1a1a" stroke-width="2.1" fill="none" opacity="0.85"/>
<path d="M238,148.8 V173.9 M235.6,168.8 H238 M238,153.4 H240.4" stroke="#10d810" stroke-width="2.1" fill="none"/>
<path d="M245.2,142 V160.1 M242.1,149.1 H245.2 M245.2,151.8 H248.3" stroke="#1a1a1a" stroke-width="2.1" fill="none" opacity="0.85"/>
<path d="M245.2,143.1 V159 M242.8,149.1 H245.2 M245.2,151.8 H247.6" stroke="#1262dc" stroke-width="2.1" fill="none"/>
<path d="M252.4,142.8 V167 M249.3,154.5 H252.4 M252.4,152.7 H255.5" stroke="#1a1a1a" stroke-width="2.1" fill="none" opacity="0.85"/>
<path d="M252.4,143.9 V165.9 M250,154.5 H252.4 M252.4,152.7 H254.8" stroke="#1262dc" stroke-width="2.1" fill="none"/>
<path d="M259.5,138.3 V157.6 M256.4,150.4 H259.5 M259.5,150.9 H262.6" stroke="#1a1a1a" stroke-width="2.1" fill="none" opacity="0.85"/>
<path d="M259.5,139.4 V156.5 M257.1,150.4 H259.5 M259.5,150.9 H261.9" stroke="#1262dc" stroke-width="2.1" fill="none"/>
<path d="M266.7,137 V155.9 M263.6,148.2 H266.7 M266.7,138.8 H269.8" stroke="#1a1a1a" stroke-width="2.1" fill="none" opacity="0.85"/>
<path d="M266.7,138.1 V154.8 M264.3,148.2 H266.7 M266.7,138.8 H269.1" stroke="#1262dc" stroke-width="2.1" fill="none"/>
<path d="M273.9,132.5 V151.4 M270.8,136.6 H273.9 M273.9,146 H277" stroke="#1a1a1a" stroke-width="2.1" fill="none" opacity="0.85"/>
<path d="M273.9,133.6 V150.3 M271.5,136.6 H273.9 M273.9,146 H276.3" stroke="#1262dc" stroke-width="2.1" fill="none"/>
<path d="M281.1,142.5 V167.8 M277.9,145 H281.1 M281.1,160 H284.2" stroke="#1a1a1a" stroke-width="2.1" fill="none" opacity="0.85"/>
<path d="M281.1,143.6 V166.7 M278.7,145 H281.1 M281.1,160 H283.4" stroke="#d20000" stroke-width="2.1" fill="none"/>
<path d="M288.2,148.2 V163.9 M285.1,157.6 H288.2 M288.2,148.7 H291.3" stroke="#1a1a1a" stroke-width="2.1" fill="none" opacity="0.85"/>
<path d="M288.2,149.3 V162.8 M285.8,157.6 H288.2 M288.2,148.7 H290.6" stroke="#1262dc" stroke-width="2.1" fill="none"/>
<path d="M295.4,146.6 V167.8 M292.3,148 H295.4 M295.4,165 H298.5" stroke="#1a1a1a" stroke-width="2.1" fill="none" opacity="0.85"/>
<path d="M295.4,147.7 V166.7 M293,148 H295.4 M295.4,165 H297.8" stroke="#d20000" stroke-width="2.1" fill="none"/>
<path d="M302.6,158.2 V166.6 M299.5,163.3 H302.6 M302.6,163.5 H305.7" stroke="#1a1a1a" stroke-width="2.1" fill="none" opacity="0.85"/>
<path d="M302.6,159.3 V165.5 M300.2,163.3 H302.6 M302.6,163.5 H305" stroke="#d20000" stroke-width="2.1" fill="none"/>
<path d="M309.7,152.4 V157.9 M306.6,156 H309.7 M309.7,154 H312.8" stroke="#1a1a1a" stroke-width="2.1" fill="none" opacity="0.85"/>
<path d="M309.7,153.5 V156.8 M307.3,156 H309.7 M309.7,154 H312.1" stroke="#1262dc" stroke-width="2.1" fill="none"/>
<path d="M316.9,137.7 V153.8 M313.8,152 H316.9 M316.9,142 H320" stroke="#1a1a1a" stroke-width="2.1" fill="none" opacity="0.85"/>
<path d="M316.9,138.8 V152.7 M314.5,152 H316.9 M316.9,142 H319.3" stroke="#10d810" stroke-width="2.1" fill="none"/>
<path d="M324.1,137.7 V152.3 M321,142 H324.1 M324.1,150 H327.2" stroke="#1a1a1a" stroke-width="2.1" fill="none" opacity="0.85"/>
<path d="M324.1,138.8 V151.2 M321.7,142 H324.1 M324.1,150 H326.5" stroke="#1262dc" stroke-width="2.1" fill="none"/>
<path d="M331.2,141.6 V159.7 M328.1,153.9 H331.2 M331.2,153.9 H334.3" stroke="#1a1a1a" stroke-width="2.1" fill="none" opacity="0.85"/>
<path d="M331.2,142.7 V158.6 M328.8,153.9 H331.2 M331.2,153.9 H333.6" stroke="#1262dc" stroke-width="2.1" fill="none"/>
<path d="M338.4,133.1 V154.6 M335.3,152.5 H338.4 M338.4,137 H341.5" stroke="#1a1a1a" stroke-width="2.1" fill="none" opacity="0.85"/>
<path d="M338.4,134.2 V153.5 M336,152.5 H338.4 M338.4,137 H340.8" stroke="#10d810" stroke-width="2.1" fill="none"/>
<path d="M345.6,122.9 V141.5 M342.5,132 H345.6 M345.6,137.8 H348.7" stroke="#1a1a1a" stroke-width="2.1" fill="none" opacity="0.85"/>
<path d="M345.6,124 V140.4 M343.2,132 H345.6 M345.6,137.8 H348" stroke="#10d810" stroke-width="2.1" fill="none"/>
<path d="M352.8,128.1 V140.2 M349.6,137.5 H352.8 M352.8,131 H355.9" stroke="#1a1a1a" stroke-width="2.1" fill="none" opacity="0.85"/>
<path d="M352.8,129.2 V139.1 M350.4,137.5 H352.8 M352.8,131 H355.1" stroke="#10d810" stroke-width="2.1" fill="none"/>
<path d="M359.9,120 V137.9 M356.8,134 H359.9 M359.9,126 H363" stroke="#1a1a1a" stroke-width="2.1" fill="none" opacity="0.85"/>
<path d="M359.9,121.1 V136.8 M357.5,134 H359.9 M359.9,126 H362.3" stroke="#10d810" stroke-width="2.1" fill="none"/>
<path d="M367.1,114.2 V128.8 M364,126.5 H367.1 M367.1,118 H370.2" stroke="#1a1a1a" stroke-width="2.1" fill="none" opacity="0.85"/>
<path d="M367.1,115.3 V127.7 M364.7,126.5 H367.1 M367.1,118 H369.5" stroke="#10d810" stroke-width="2.1" fill="none"/>
<path d="M374.3,116.5 V139.4 M371.2,118.5 H374.3 M374.3,133 H377.4" stroke="#1a1a1a" stroke-width="2.1" fill="none" opacity="0.85"/>
<path d="M374.3,117.6 V138.3 M371.9,118.5 H374.3 M374.3,133 H376.7" stroke="#1262dc" stroke-width="2.1" fill="none"/>
<path d="M381.4,120.3 V135.7 M378.3,133 H381.4 M381.4,125 H384.5" stroke="#1a1a1a" stroke-width="2.1" fill="none" opacity="0.85"/>
<path d="M381.4,121.4 V134.6 M379,133 H381.4 M381.4,125 H383.8" stroke="#1262dc" stroke-width="2.1" fill="none"/>
<path d="M388.6,117.2 V128.9 M385.5,126 H388.6 M388.6,120 H391.7" stroke="#1a1a1a" stroke-width="2.1" fill="none" opacity="0.85"/>
<path d="M388.6,118.3 V127.8 M386.2,126 H388.6 M388.6,120 H391" stroke="#10d810" stroke-width="2.1" fill="none"/>
<path d="M395.8,102.2 V121.4 M392.7,119.5 H395.8 M395.8,105 H398.9" stroke="#1a1a1a" stroke-width="2.1" fill="none" opacity="0.85"/>
<path d="M395.8,103.3 V120.3 M393.4,119.5 H395.8 M395.8,105 H398.2" stroke="#10d810" stroke-width="2.1" fill="none"/>
<path d="M402.9,71.2 V106.4 M399.8,104.5 H402.9 M402.9,75 H406" stroke="#1a1a1a" stroke-width="2.1" fill="none" opacity="0.85"/>
<path d="M402.9,72.3 V105.3 M400.5,104.5 H402.9 M402.9,75 H405.3" stroke="#10d810" stroke-width="2.1" fill="none"/>
<path d="M410.1,61.6 V87.8 M407,76 H410.1 M410.1,80 H413.2" stroke="#1a1a1a" stroke-width="2.1" fill="none" opacity="0.85"/>
<path d="M410.1,62.7 V86.7 M407.7,76 H410.1 M410.1,80 H412.5" stroke="#10d810" stroke-width="2.1" fill="none"/>
<path d="M417.3,67.3 V85.4 M414.2,82 H417.3 M417.3,69.2 H420.4" stroke="#1a1a1a" stroke-width="2.1" fill="none" opacity="0.85"/>
<path d="M417.3,68.4 V84.3 M414.9,82 H417.3 M417.3,69.2 H419.7" stroke="#10d810" stroke-width="2.1" fill="none"/>
<path d="M424.5,60.5 V97.9 M421.4,68 H424.5 M424.5,90 H427.6" stroke="#1a1a1a" stroke-width="2.1" fill="none" opacity="0.85"/>
<path d="M424.5,61.6 V96.8 M422.1,68 H424.5 M424.5,90 H426.9" stroke="#1262dc" stroke-width="2.1" fill="none"/>
<path d="M431.6,70.9 V92.5 M428.5,90.6 H431.6 M431.6,77.8 H434.7" stroke="#1a1a1a" stroke-width="2.1" fill="none" opacity="0.85"/>
<path d="M431.6,72 V91.4 M429.2,90.6 H431.6 M431.6,77.8 H434" stroke="#1262dc" stroke-width="2.1" fill="none"/>
<path d="M438.8,44.5 V78.6 M435.7,76.5 H438.8 M438.8,47 H441.9" stroke="#1a1a1a" stroke-width="2.1" fill="none" opacity="0.85"/>
<path d="M438.8,45.6 V77.5 M436.4,76.5 H438.8 M438.8,47 H441.2" stroke="#10d810" stroke-width="2.1" fill="none"/>
<path d="M446,34.8 V61.5 M442.9,36 H446 M446,50 H449.1" stroke="#1a1a1a" stroke-width="2.1" fill="none" opacity="0.85"/>
<path d="M446,35.9 V60.4 M443.6,36 H446 M446,50 H448.4" stroke="#10d810" stroke-width="2.1" fill="none"/>
<path d="M453.1,48.8 V93.6 M450,50.5 H453.1 M453.1,91.5 H456.2" stroke="#1a1a1a" stroke-width="2.1" fill="none" opacity="0.85"/>
<path d="M453.1,49.9 V92.5 M450.7,50.5 H453.1 M453.1,91.5 H455.5" stroke="#d20000" stroke-width="2.1" fill="none"/>
<path d="M460.3,79.8 V108.4 M457.2,85 H460.3 M460.3,98 H463.4" stroke="#1a1a1a" stroke-width="2.1" fill="none" opacity="0.85"/>
<path d="M460.3,80.9 V107.3 M457.9,85 H460.3 M460.3,98 H462.7" stroke="#d20000" stroke-width="2.1" fill="none"/>
<path d="M467.5,91.9 V133.4 M464.4,96 H467.5 M467.5,110.3 H470.6" stroke="#1a1a1a" stroke-width="2.1" fill="none" opacity="0.85"/>
<path d="M467.5,93 V132.3 M465.1,96 H467.5 M467.5,110.3 H469.9" stroke="#d20000" stroke-width="2.1" fill="none"/>
<path d="M474.6,108.1 V126.5 M471.5,112 H474.6 M474.6,123.5 H477.7" stroke="#1a1a1a" stroke-width="2.1" fill="none" opacity="0.85"/>
<path d="M474.6,109.2 V125.4 M472.2,112 H474.6 M474.6,123.5 H477" stroke="#d20000" stroke-width="2.1" fill="none"/>
<path d="M481.8,116.5 V136.4 M478.7,123.5 H481.8 M481.8,120 H484.9" stroke="#1a1a1a" stroke-width="2.1" fill="none" opacity="0.85"/>
<path d="M481.8,117.6 V135.3 M479.4,123.5 H481.8 M481.8,120 H484.2" stroke="#d20000" stroke-width="2.1" fill="none"/>
<path d="M489,107.4 V124.3 M485.9,119 H489 M489,110 H492.1" stroke="#1a1a1a" stroke-width="2.1" fill="none" opacity="0.85"/>
<path d="M489,108.5 V123.2 M486.6,119 H489 M489,110 H491.4" stroke="#1262dc" stroke-width="2.1" fill="none"/>
<path d="M496.2,105.9 V123.5 M493.1,108 H496.2 M496.2,121 H499.3" stroke="#1a1a1a" stroke-width="2.1" fill="none" opacity="0.85"/>
<path d="M496.2,107 V122.4 M493.8,108 H496.2 M496.2,121 H498.6" stroke="#d20000" stroke-width="2.1" fill="none"/>
<path d="M503.3,118.7 V134.9 M500.2,122 H503.3 M503.3,127 H506.4" stroke="#1a1a1a" stroke-width="2.1" fill="none" opacity="0.85"/>
<path d="M503.3,119.8 V133.8 M500.9,122 H503.3 M503.3,127 H505.7" stroke="#d20000" stroke-width="2.1" fill="none"/>
<path d="M510.5,109.2 V131.1 M507.4,127 H510.5 M510.5,110.5 H513.6" stroke="#1a1a1a" stroke-width="2.1" fill="none" opacity="0.85"/>
<path d="M510.5,110.3 V130 M508.1,127 H510.5 M510.5,110.5 H512.9" stroke="#1262dc" stroke-width="2.1" fill="none"/>
<path d="M517.7,105.9 V121.3 M514.6,110 H517.7 M517.7,113 H520.8" stroke="#1a1a1a" stroke-width="2.1" fill="none" opacity="0.85"/>
<path d="M517.7,107 V120.2 M515.3,110 H517.7 M517.7,113 H520.1" stroke="#1262dc" stroke-width="2.1" fill="none"/>
<path d="M524.8,110.5 V125.7 M521.7,114 H524.8 M524.8,124.5 H527.9" stroke="#1a1a1a" stroke-width="2.1" fill="none" opacity="0.85"/>
<path d="M524.8,111.6 V124.6 M522.4,114 H524.8 M524.8,124.5 H527.2" stroke="#1262dc" stroke-width="2.1" fill="none"/>
<path d="M532,112.1 V132.8 M528.9,123 H532 M532,114.5 H535.1" stroke="#1a1a1a" stroke-width="2.1" fill="none" opacity="0.85"/>
<path d="M532,113.2 V131.7 M529.6,123 H532 M532,114.5 H534.4" stroke="#10d810" stroke-width="2.1" fill="none"/>
<path d="M539.2,102.5 V114.3 M536.1,113.5 H539.2 M539.2,111.4 H542.3" stroke="#1a1a1a" stroke-width="2.1" fill="none" opacity="0.85"/>
<path d="M539.2,103.6 V113.2 M536.8,113.5 H539.2 M539.2,111.4 H541.6" stroke="#10d810" stroke-width="2.1" fill="none"/>
<path d="M546.3,86.3 V116.5 M543.2,110 H546.3 M546.3,93 H549.4" stroke="#1a1a1a" stroke-width="2.1" fill="none" opacity="0.85"/>
<path d="M546.3,87.4 V115.4 M543.9,110 H546.3 M546.3,93 H548.7" stroke="#10d810" stroke-width="2.1" fill="none"/>
<path d="M553.5,88.9 V104.4 M550.4,94 H553.5 M553.5,97 H556.6" stroke="#1a1a1a" stroke-width="2.1" fill="none" opacity="0.85"/>
<path d="M553.5,90 V103.3 M551.1,94 H553.5 M553.5,97 H555.9" stroke="#10d810" stroke-width="2.1" fill="none"/>
<path d="M560.7,92.4 V106.3 M557.6,97 H560.7 M560.7,103 H563.8" stroke="#1a1a1a" stroke-width="2.1" fill="none" opacity="0.85"/>
<path d="M560.7,93.5 V105.2 M558.3,97 H560.7 M560.7,103 H563.1" stroke="#10d810" stroke-width="2.1" fill="none"/>
<path d="M567.9,101.5 V118.7 M564.8,102.5 H567.9 M567.9,114.3 H571" stroke="#1a1a1a" stroke-width="2.1" fill="none" opacity="0.85"/>
<path d="M567.9,102.6 V117.6 M565.5,102.5 H567.9 M567.9,114.3 H570.2" stroke="#d20000" stroke-width="2.1" fill="none"/>
<path d="M575,98.9 V119.9 M571.9,116 H575 M575,101 H578.1" stroke="#1a1a1a" stroke-width="2.1" fill="none" opacity="0.85"/>
<path d="M575,100 V118.8 M572.6,116 H575 M575,101 H577.4" stroke="#10d810" stroke-width="2.1" fill="none"/>
<path d="M582.2,98.6 V117.8 M579.1,100 H582.2 M582.2,116.8 H585.3" stroke="#1a1a1a" stroke-width="2.1" fill="none" opacity="0.85"/>
<path d="M582.2,99.7 V116.7 M579.8,100 H582.2 M582.2,116.8 H584.6" stroke="#d20000" stroke-width="2.1" fill="none"/>
<path d="M589.4,108.9 V124.6 M586.3,118 H589.4 M589.4,118 H592.5" stroke="#1a1a1a" stroke-width="2.1" fill="none" opacity="0.85"/>
<path d="M589.4,110 V123.5 M587,118 H589.4 M589.4,118 H591.8" stroke="#d20000" stroke-width="2.1" fill="none"/>
<path d="M596.5,108.2 V118.6 M593.4,114 H596.5 M596.5,114 H599.6" stroke="#1a1a1a" stroke-width="2.1" fill="none" opacity="0.85"/>
<path d="M596.5,109.3 V117.5 M594.1,114 H596.5 M596.5,114 H598.9" stroke="#d20000" stroke-width="2.1" fill="none"/>
<path d="M603.7,106.9 V120.6 M600.6,115 H603.7 M603.7,114 H606.8" stroke="#1a1a1a" stroke-width="2.1" fill="none" opacity="0.85"/>
<path d="M603.7,108 V119.5 M601.3,115 H603.7 M603.7,114 H606.1" stroke="#1262dc" stroke-width="2.1" fill="none"/>
<path d="M610.9,116.9 V157.3 M607.8,118 H610.9 M610.9,142 H614" stroke="#1a1a1a" stroke-width="2.1" fill="none" opacity="0.85"/>
<path d="M610.9,118 V156.2 M608.5,118 H610.9 M610.9,142 H613.3" stroke="#d20000" stroke-width="2.1" fill="none"/>
<path d="M618,123.6 V135.3 M614.9,131 H618 M618,131 H621.1" stroke="#1a1a1a" stroke-width="2.1" fill="none" opacity="0.85"/>
<path d="M618,124.7 V134.2 M615.6,131 H618 M618,131 H620.4" stroke="#d20000" stroke-width="2.1" fill="none"/>
<path d="M625.2,116.9 V136 M622.1,135 H625.2 M625.2,129 H628.3" stroke="#1a1a1a" stroke-width="2.1" fill="none" opacity="0.85"/>
<path d="M625.2,118 V134.9 M622.8,135 H625.2 M625.2,129 H627.6" stroke="#1262dc" stroke-width="2.1" fill="none"/>
<path d="M632.4,125.6 V152 M629.3,128 H632.4 M632.4,145 H635.5" stroke="#1a1a1a" stroke-width="2.1" fill="none" opacity="0.85"/>
<path d="M632.4,126.7 V150.9 M630,128 H632.4 M632.4,145 H634.8" stroke="#d20000" stroke-width="2.1" fill="none"/>
<path d="M639.6,132.3 V148 M636.5,144 H639.6 M639.6,141 H642.7" stroke="#1a1a1a" stroke-width="2.1" fill="none" opacity="0.85"/>
<path d="M639.6,133.4 V146.9 M637.2,144 H639.6 M639.6,141 H642" stroke="#1262dc" stroke-width="2.1" fill="none"/>
<path d="M646.7,132.3 V150 M643.6,139 H646.7 M646.7,139 H649.8" stroke="#1a1a1a" stroke-width="2.1" fill="none" opacity="0.85"/>
<path d="M646.7,133.4 V148.9 M644.3,139 H646.7 M646.7,139 H649.1" stroke="#1262dc" stroke-width="2.1" fill="none"/>
<path d="M653.9,118.8 V140.6 M650.8,139.5 H653.9 M653.9,121 H657" stroke="#1a1a1a" stroke-width="2.1" fill="none" opacity="0.85"/>
<path d="M653.9,119.9 V139.5 M651.5,139.5 H653.9 M653.9,121 H656.3" stroke="#10d810" stroke-width="2.1" fill="none"/>
<path d="M661.1,119.8 V146 M658,123 H661.1 M661.1,138 H664.2" stroke="#1a1a1a" stroke-width="2.1" fill="none" opacity="0.85"/>
<path d="M661.1,120.9 V144.9 M658.7,123 H661.1 M661.1,138 H663.5" stroke="#1262dc" stroke-width="2.1" fill="none"/>
<path d="M668.2,133.2 V147.6 M665.1,146 H668.2 M668.2,138 H671.3" stroke="#1a1a1a" stroke-width="2.1" fill="none" opacity="0.85"/>
<path d="M668.2,134.3 V146.5 M665.8,146 H668.2 M668.2,138 H670.6" stroke="#1262dc" stroke-width="2.1" fill="none"/>
<path d="M675.4,130.5 V144.4 M672.3,137 H675.4 M675.4,137 H678.5" stroke="#1a1a1a" stroke-width="2.1" fill="none" opacity="0.85"/>
<path d="M675.4,131.6 V143.3 M673,137 H675.4 M675.4,137 H677.8" stroke="#1262dc" stroke-width="2.1" fill="none"/>
<path d="M682.6,129.5 V135.8 M679.5,134 H682.6 M682.6,131.5 H685.7" stroke="#1a1a1a" stroke-width="2.1" fill="none" opacity="0.85"/>
<path d="M682.6,130.6 V134.7 M680.2,134 H682.6 M682.6,131.5 H685" stroke="#10d810" stroke-width="2.1" fill="none"/>
<path d="M689.7,124.6 V140.6 M686.6,131 H689.7 M689.7,130 H692.8" stroke="#1a1a1a" stroke-width="2.1" fill="none" opacity="0.85"/>
<path d="M689.7,125.7 V139.5 M687.3,131 H689.7 M689.7,130 H692.1" stroke="#10d810" stroke-width="2.1" fill="none"/>
<path d="M696.9,124.1 V140.1 M693.8,132 H696.9 M696.9,128.5 H700" stroke="#1a1a1a" stroke-width="2.1" fill="none" opacity="0.85"/>
<path d="M696.9,125.2 V139 M694.5,132 H696.9 M696.9,128.5 H699.3" stroke="#10d810" stroke-width="2.1" fill="none"/>
<path d="M704.1,123 V140.1 M701,129 H704.1 M704.1,132 H707.2" stroke="#1a1a1a" stroke-width="2.1" fill="none" opacity="0.85"/>
<path d="M704.1,124.1 V139 M701.7,129 H704.1 M704.1,132 H706.5" stroke="#d20000" stroke-width="2.1" fill="none"/>
<path d="M711.2,131.6 V144.9 M708.1,136 H711.2 M711.2,139.5 H714.4" stroke="#1a1a1a" stroke-width="2.1" fill="none" opacity="0.85"/>
<path d="M711.2,132.7 V143.8 M708.9,136 H711.2 M711.2,139.5 H713.6" stroke="#d20000" stroke-width="2.1" fill="none"/>
<path d="M718.4,131.6 V149.2 M715.3,139.3 H718.4 M718.4,134.4 H721.5" stroke="#1a1a1a" stroke-width="2.1" fill="none" opacity="0.85"/>
<path d="M718.4,132.7 V148.1 M716,139.3 H718.4 M718.4,134.4 H720.8" stroke="#1262dc" stroke-width="2.1" fill="none"/>
<path d="M725.6,131.1 V141.7 M722.5,135 H725.6 M725.6,135 H728.7" stroke="#1a1a1a" stroke-width="2.1" fill="none" opacity="0.85"/>
<path d="M725.6,132.2 V140.6 M723.2,135 H725.6 M725.6,135 H728" stroke="#1262dc" stroke-width="2.1" fill="none"/>
<path d="M732.8,128.9 V139.5 M729.7,134 H732.8 M732.8,137.5 H735.9" stroke="#1a1a1a" stroke-width="2.1" fill="none" opacity="0.85"/>
<path d="M732.8,130 V138.4 M730.4,134 H732.8 M732.8,137.5 H735.2" stroke="#d20000" stroke-width="2.1" fill="none"/>
<path d="M739.9,132.7 V143.8 M736.8,142 H739.9 M739.9,134 H743" stroke="#1a1a1a" stroke-width="2.1" fill="none" opacity="0.85"/>
<path d="M739.9,133.8 V142.7 M737.5,142 H739.9 M739.9,134 H742.3" stroke="#10d810" stroke-width="2.1" fill="none"/>
<path d="M747.1,111.8 V135.8 M744,133 H747.1 M747.1,119 H750.2" stroke="#1a1a1a" stroke-width="2.1" fill="none" opacity="0.85"/>
<path d="M747.1,112.9 V134.7 M744.7,133 H747.1 M747.1,119 H749.5" stroke="#10d810" stroke-width="2.1" fill="none"/>
<path d="M754.3,109.1 V129.4 M751.2,115.5 H754.3 M754.3,127.5 H757.4" stroke="#1a1a1a" stroke-width="2.1" fill="none" opacity="0.85"/>
<path d="M754.3,110.2 V128.3 M751.9,115.5 H754.3 M754.3,127.5 H756.7" stroke="#1262dc" stroke-width="2.1" fill="none"/>
<path d="M761.4,125.7 V137.9 M758.3,130 H761.4 M761.4,132 H764.5" stroke="#1a1a1a" stroke-width="2.1" fill="none" opacity="0.85"/>
<path d="M761.4,126.8 V136.8 M759,130 H761.4 M761.4,132 H763.8" stroke="#d20000" stroke-width="2.1" fill="none"/>
<path d="M768.6,126.8 V136.9 M765.5,131 H768.6 M768.6,130 H771.7" stroke="#1a1a1a" stroke-width="2.1" fill="none" opacity="0.85"/>
<path d="M768.6,127.9 V135.8 M766.2,131 H768.6 M768.6,130 H771" stroke="#1262dc" stroke-width="2.1" fill="none"/>
<path d="M775.8,126.8 V145.4 M772.7,128 H775.8 M775.8,140.5 H778.9" stroke="#1a1a1a" stroke-width="2.1" fill="none" opacity="0.85"/>
<path d="M775.8,127.9 V144.3 M773.4,128 H775.8 M775.8,140.5 H778.2" stroke="#d20000" stroke-width="2.1" fill="none"/>
<path d="M783,136.9 V151.8 M779.9,141.5 H783 M783,150.5 H786.1" stroke="#1a1a1a" stroke-width="2.1" fill="none" opacity="0.85"/>
<path d="M783,138 V150.7 M780.6,141.5 H783 M783,150.5 H785.4" stroke="#d20000" stroke-width="2.1" fill="none"/>
<path d="M790.1,138.2 V150.8 M787,149.5 H790.1 M790.1,144.5 H793.2" stroke="#1a1a1a" stroke-width="2.1" fill="none" opacity="0.85"/>
<path d="M790.1,139.3 V149.7 M787.7,149.5 H790.1 M790.1,144.5 H792.5" stroke="#d20000" stroke-width="2.1" fill="none"/>
<path d="M797.3,141.8 V167.2 M794.2,145 H797.3 M797.3,166 H800.4" stroke="#1a1a1a" stroke-width="2.1" fill="none" opacity="0.85"/>
<path d="M797.3,142.9 V166.1 M794.9,145 H797.3 M797.3,166 H799.7" stroke="#d20000" stroke-width="2.1" fill="none"/>
<path d="M804.5,155.2 V170.8 M801.4,159 H804.5 M804.5,159 H807.6" stroke="#1a1a1a" stroke-width="2.1" fill="none" opacity="0.85"/>
<path d="M804.5,156.3 V169.7 M802.1,159 H804.5 M804.5,159 H806.9" stroke="#d20000" stroke-width="2.1" fill="none"/>
<path d="M811.6,156.8 V169.8 M808.5,163.7 H811.6 M811.6,158.1 H814.7" stroke="#1a1a1a" stroke-width="2.1" fill="none" opacity="0.85"/>
<path d="M811.6,157.9 V168.7 M809.2,163.7 H811.6 M811.6,158.1 H814" stroke="#1262dc" stroke-width="2.1" fill="none"/>
<path d="M818.8,156.9 V174 M815.7,158 H818.8 M818.8,164 H821.9" stroke="#1a1a1a" stroke-width="2.1" fill="none" opacity="0.85"/>
<path d="M818.8,158 V172.9 M816.4,158 H818.8 M818.8,164 H821.2" stroke="#d20000" stroke-width="2.1" fill="none"/>
<path d="M826,159.6 V174.3 M822.9,165 H826 M826,172.5 H829.1" stroke="#1a1a1a" stroke-width="2.1" fill="none" opacity="0.85"/>
<path d="M826,160.7 V173.2 M823.6,165 H826 M826,172.5 H828.4" stroke="#d20000" stroke-width="2.1" fill="none"/>
<path d="M833.1,174.8 V214.1 M830,176 H833.1 M833.1,190 H836.2" stroke="#1a1a1a" stroke-width="2.1" fill="none" opacity="0.85"/>
<path d="M833.1,175.9 V213 M830.7,176 H833.1 M833.1,190 H835.5" stroke="#d20000" stroke-width="2.1" fill="none"/>
<path d="M840.3,191.7 V203.9 M837.2,198 H840.3 M840.3,203.4 H843.4" stroke="#1a1a1a" stroke-width="2.1" fill="none" opacity="0.85"/>
<path d="M840.3,192.8 V202.8 M837.9,198 H840.3 M840.3,203.4 H842.7" stroke="#d20000" stroke-width="2.1" fill="none"/>
<line x1="0" y1="350.8" x2="866" y2="350.8" stroke="#b4b4b4" stroke-width="1"/>
<polyline points="0,342.5 21.4,340.3 42.8,337.8 53.5,336.7 64.2,337.8 85.6,339.9 96.3,342.1 107,346.3 116.6,351 128.4,356 139.1,357.5 161.4,356 182.8,353.8 199.9,349.5 214.9,342.1 229.9,330.3 242.7,320.7 255.6,314.2 268.4,308.9 277,307.4 290,308.3 301.4,312.1 333.5,319.6 348.5,320.7 369.9,318.5 391.3,319.6 408.4,313.2 419.1,308.9 430.7,305.7 445.7,300.3 455.3,301 467.1,307.8 484.2,322.8 505.6,336.7 527,346.3 539.8,348.9 548.4,348 559.1,346.3 581.4,348.5 602.8,350.6 619.9,356 632.8,361.3 645.6,364.5 667,366 688.4,363.9 710,361.3 721.4,360.9 738.5,359.8 753.5,356.6 772.7,354.9 781.3,355.9 794.1,360.2 811.2,363.4 826.2,366.6 840.3,373.7" fill="none" stroke="#ff9422" stroke-width="1.15"/>
<polyline points="0,345.3 21.4,339.9 32.1,335.2 43.9,331.8 51.4,335.2 59.9,340.3 65.3,341.6 72.8,338.8 80.2,342.5 86.7,340.3 94.2,346.3 100.6,354.9 107,359.2 115.6,362.4 124.1,363 137,361.3 145,357 152.8,354.9 172.1,354.5 182.8,348.5 195.6,341 204.2,334.6 212.8,322.8 221.3,313.2 229.9,311 238.4,305.7 247,302.5 257.7,301.8 266.3,300.3 273.7,302 281.2,306.7 288.6,310 301.4,319.6 310,321.7 317.4,320.7 331.4,325.4 339.9,322.8 348.5,321.7 365.6,316.8 374.2,319.6 389.1,319.6 395.6,316.4 404.1,306.7 417,297.5 424.3,300.3 430.7,300.3 439.3,292.8 445.7,290.3 454.2,301.4 462.8,314.2 475.6,332.4 482.1,339.9 488.5,342.5 501.3,351.2 516.3,352.5 527,353.5 535.6,352.5 542,350.6 548.4,347.4 559.1,344.6 568.6,348 575,346.8 581.4,349.5 592.1,351.7 607.1,354.9 615.6,361.3 628.5,366.7 637,369.9 645.6,371 654.2,366.7 667,366.7 677.7,365.2 688.4,362.4 697,359.6 710.7,360.9 725.7,359.1 738.5,358.7 747.1,353.4 755.6,352.3 770.6,352.7 781.3,358.1 789.8,360.2 798.4,366.6 807,369.8 815.5,370.9 824.1,374.1 832.6,380.5 840.3,388" fill="none" stroke="#3a26e4" stroke-width="1.2"/>
<rect x="-0.7" y="350.8" width="4.3" height="5.2" fill="#0a84ff"/>
<rect x="6.4" y="350.8" width="4.3" height="2" fill="#0a84ff"/>
<rect x="13.6" y="349.5" width="4.3" height="1.3" fill="#0a84ff"/>
<rect x="20.8" y="347.4" width="4.3" height="3.4" fill="#0a84ff"/>
<rect x="28" y="342" width="4.3" height="8.8" fill="#0a84ff"/>
<rect x="35.1" y="339.5" width="4.3" height="11.3" fill="#0a84ff"/>
<rect x="42.3" y="339.9" width="4.3" height="10.9" fill="#8e8e8e"/>
<rect x="49.5" y="347.4" width="4.3" height="3.4" fill="#8e8e8e"/>
<rect x="56.6" y="350.8" width="4.3" height="5.2" fill="#8e8e8e"/>
<rect x="63.8" y="350.8" width="4.3" height="6.2" fill="#8e8e8e"/>
<rect x="71" y="350.8" width="4.3" height="1.2" fill="#0a84ff"/>
<rect x="78.1" y="350.8" width="4.3" height="6.2" fill="#8e8e8e"/>
<rect x="85.3" y="350.8" width="4.3" height="1.5" fill="#0a84ff"/>
<rect x="92.5" y="350.8" width="4.3" height="8" fill="#8e8e8e"/>
<rect x="99.7" y="350.8" width="4.3" height="20.8" fill="#8e8e8e"/>
<rect x="106.8" y="350.8" width="4.3" height="24.4" fill="#8e8e8e"/>
<rect x="114" y="350.8" width="4.3" height="24.4" fill="#0a84ff"/>
<rect x="121.2" y="350.8" width="4.3" height="20.2" fill="#0a84ff"/>
<rect x="128.3" y="350.8" width="4.3" height="13.3" fill="#0a84ff"/>
<rect x="135.5" y="350.8" width="4.3" height="10.5" fill="#0a84ff"/>
<rect x="142.7" y="350.8" width="4.3" height="3" fill="#0a84ff"/>
<rect x="149.8" y="348" width="4.3" height="2.8" fill="#0a84ff"/>
<rect x="157" y="346.3" width="4.3" height="4.5" fill="#0a84ff"/>
<rect x="164.2" y="349.1" width="4.3" height="1.7" fill="#8e8e8e"/>
<rect x="171.3" y="349.1" width="4.3" height="1.7" fill="#8e8e8e"/>
<rect x="178.5" y="344.2" width="4.3" height="6.6" fill="#0a84ff"/>
<rect x="185.7" y="341.6" width="4.3" height="9.2" fill="#0a84ff"/>
<rect x="192.9" y="337.1" width="4.3" height="13.7" fill="#0a84ff"/>
<rect x="200" y="335" width="4.3" height="15.8" fill="#0a84ff"/>
<rect x="207.2" y="323.9" width="4.3" height="26.9" fill="#0a84ff"/>
<rect x="214.4" y="307.8" width="4.3" height="43" fill="#0a84ff"/>
<rect x="221.5" y="310.6" width="4.3" height="40.2" fill="#8e8e8e"/>
<rect x="228.7" y="317.9" width="4.3" height="32.9" fill="#8e8e8e"/>
<rect x="235.9" y="317.9" width="4.3" height="32.9" fill="#8e8e8e"/>
<rect x="243" y="320.7" width="4.3" height="30.1" fill="#8e8e8e"/>
<rect x="250.2" y="326" width="4.3" height="24.8" fill="#8e8e8e"/>
<rect x="257.4" y="331.8" width="4.3" height="19" fill="#8e8e8e"/>
<rect x="264.6" y="333.1" width="4.3" height="17.7" fill="#8e8e8e"/>
<rect x="271.7" y="339.3" width="4.3" height="11.5" fill="#8e8e8e"/>
<rect x="278.9" y="350.3" width="4.3" height="1" fill="#8e8e8e"/>
<rect x="286.1" y="350.8" width="4.3" height="2.4" fill="#8e8e8e"/>
<rect x="293.2" y="350.8" width="4.3" height="11.6" fill="#8e8e8e"/>
<rect x="300.4" y="350.8" width="4.3" height="16.9" fill="#8e8e8e"/>
<rect x="307.6" y="350.8" width="4.3" height="15.9" fill="#0a84ff"/>
<rect x="314.8" y="350.8" width="4.3" height="10.9" fill="#0a84ff"/>
<rect x="321.9" y="350.8" width="4.3" height="11.2" fill="#8e8e8e"/>
<rect x="329.1" y="350.8" width="4.3" height="12.7" fill="#8e8e8e"/>
<rect x="336.3" y="350.8" width="4.3" height="5.8" fill="#0a84ff"/>
<rect x="343.4" y="350.8" width="4.3" height="4.1" fill="#0a84ff"/>
<rect x="350.6" y="350.3" width="4.3" height="1" fill="#0a84ff"/>
<rect x="357.8" y="348.9" width="4.3" height="1.9" fill="#0a84ff"/>
<rect x="364.9" y="345.3" width="4.3" height="5.5" fill="#0a84ff"/>
<rect x="372.1" y="350.3" width="4.3" height="1" fill="#8e8e8e"/>
<rect x="379.3" y="350.3" width="4.3" height="1" fill="#8e8e8e"/>
<rect x="386.5" y="350.3" width="4.3" height="1" fill="#0a84ff"/>
<rect x="393.6" y="345.7" width="4.3" height="5.1" fill="#0a84ff"/>
<rect x="400.8" y="333.1" width="4.3" height="17.7" fill="#0a84ff"/>
<rect x="408" y="330.3" width="4.3" height="20.5" fill="#0a84ff"/>
<rect x="415.1" y="327.1" width="4.3" height="23.7" fill="#0a84ff"/>
<rect x="422.3" y="337.4" width="4.3" height="13.4" fill="#8e8e8e"/>
<rect x="429.5" y="340.3" width="4.3" height="10.5" fill="#8e8e8e"/>
<rect x="436.6" y="331.8" width="4.3" height="19" fill="#0a84ff"/>
<rect x="443.8" y="331.4" width="4.3" height="19.4" fill="#0a84ff"/>
<rect x="451" y="350.3" width="4.3" height="1" fill="#8e8e8e"/>
<rect x="458.2" y="350.8" width="4.3" height="15.2" fill="#8e8e8e"/>
<rect x="465.3" y="350.8" width="4.3" height="28.3" fill="#8e8e8e"/>
<rect x="472.5" y="350.8" width="4.3" height="40" fill="#8e8e8e"/>
<rect x="479.7" y="350.8" width="4.3" height="43" fill="#8e8e8e"/>
<rect x="486.8" y="350.8" width="4.3" height="37.9" fill="#0a84ff"/>
<rect x="494" y="350.8" width="4.3" height="37.9" fill="#0a84ff"/>
<rect x="501.2" y="350.8" width="4.3" height="37.9" fill="#8e8e8e"/>
<rect x="508.3" y="350.8" width="4.3" height="28.7" fill="#0a84ff"/>
<rect x="515.5" y="350.8" width="4.3" height="22.5" fill="#0a84ff"/>
<rect x="522.7" y="350.8" width="4.3" height="22.1" fill="#0a84ff"/>
<rect x="529.9" y="350.8" width="4.3" height="16.1" fill="#0a84ff"/>
<rect x="537" y="350.8" width="4.3" height="10.5" fill="#0a84ff"/>
<rect x="544.2" y="350.3" width="4.3" height="1" fill="#8e8e8e"/>
<rect x="551.4" y="346.3" width="4.3" height="4.5" fill="#0a84ff"/>
<rect x="558.5" y="347.4" width="4.3" height="3.4" fill="#8e8e8e"/>
<rect x="565.7" y="350.8" width="4.3" height="1.1" fill="#8e8e8e"/>
<rect x="572.9" y="350.3" width="4.3" height="1" fill="#0a84ff"/>
<rect x="580" y="350.8" width="4.3" height="4.1" fill="#8e8e8e"/>
<rect x="587.2" y="350.8" width="4.3" height="6.7" fill="#8e8e8e"/>
<rect x="594.4" y="350.8" width="4.3" height="7.3" fill="#8e8e8e"/>
<rect x="601.6" y="350.8" width="4.3" height="6.7" fill="#0a84ff"/>
<rect x="608.7" y="350.8" width="4.3" height="16.9" fill="#8e8e8e"/>
<rect x="615.9" y="350.8" width="4.3" height="16.9" fill="#0a84ff"/>
<rect x="623.1" y="350.8" width="4.3" height="13.7" fill="#0a84ff"/>
<rect x="630.2" y="350.8" width="4.3" height="18" fill="#8e8e8e"/>
<rect x="637.4" y="350.8" width="4.3" height="16.9" fill="#0a84ff"/>
<rect x="644.6" y="350.8" width="4.3" height="13.1" fill="#0a84ff"/>
<rect x="651.7" y="350.8" width="4.3" height="3.7" fill="#0a84ff"/>
<rect x="658.9" y="350.8" width="4.3" height="3.7" fill="#0a84ff"/>
<rect x="666.1" y="350.8" width="4.3" height="2.8" fill="#0a84ff"/>
<rect x="673.2" y="350.8" width="4.3" height="1.5" fill="#0a84ff"/>
<rect x="680.4" y="348.9" width="4.3" height="1.9" fill="#0a84ff"/>
<rect x="687.6" y="346.3" width="4.3" height="4.5" fill="#0a84ff"/>
<rect x="694.8" y="343.8" width="4.3" height="7" fill="#0a84ff"/>
<rect x="701.9" y="344.8" width="4.3" height="6" fill="#8e8e8e"/>
<rect x="709.1" y="348" width="4.3" height="2.8" fill="#8e8e8e"/>
<rect x="716.3" y="348" width="4.3" height="2.8" fill="#0a84ff"/>
<rect x="723.4" y="347.4" width="4.3" height="3.4" fill="#0a84ff"/>
<rect x="730.6" y="348.9" width="4.3" height="1.9" fill="#8e8e8e"/>
<rect x="737.8" y="347.4" width="4.3" height="3.4" fill="#0a84ff"/>
<rect x="745" y="341" width="4.3" height="9.8" fill="#0a84ff"/>
<rect x="752.1" y="342" width="4.3" height="8.8" fill="#8e8e8e"/>
<rect x="759.3" y="344.2" width="4.3" height="6.6" fill="#8e8e8e"/>
<rect x="766.5" y="345.2" width="4.3" height="5.6" fill="#8e8e8e"/>
<rect x="773.6" y="350.3" width="4.3" height="1" fill="#8e8e8e"/>
<rect x="780.8" y="350.8" width="4.3" height="5.8" fill="#8e8e8e"/>
<rect x="788" y="350.8" width="4.3" height="6.6" fill="#8e8e8e"/>
<rect x="795.1" y="350.8" width="4.3" height="14.8" fill="#8e8e8e"/>
<rect x="802.3" y="350.8" width="4.3" height="15.8" fill="#8e8e8e"/>
<rect x="809.5" y="350.8" width="4.3" height="13.7" fill="#0a84ff"/>
<rect x="816.7" y="350.8" width="4.3" height="13.7" fill="#0a84ff"/>
<rect x="823.8" y="350.8" width="4.3" height="14.8" fill="#8e8e8e"/>
<rect x="831" y="350.8" width="4.3" height="21.2" fill="#8e8e8e"/>
<rect x="838.2" y="350.8" width="4.3" height="27.6" fill="#8e8e8e"/>
<line x1="0" y1="511.2" x2="866" y2="511.2" stroke="#dff2f6" stroke-width="0.8"/>
<line x1="0" y1="510.4" x2="867" y2="510.4" stroke="#c4c4c4" stroke-width="1"/>
<polyline points="0,510.3 592.8,509.5 622.8,507.3 650.6,501 682.7,495.6 710,493.4 752.8,487 795.6,481.7 840.3,476.7" fill="none" stroke="#f25a5a" stroke-width="1"/>
<line x1="0" y1="510.3" x2="592" y2="510.3" stroke="#dc4848" stroke-width="1.3"/>
<polyline points="586,510.3 590.7,509.5 601.4,499.9 612.1,487 622.8,474.2 633.5,460.3 644.2,444.2 652.8,434.6 659.2,431 667.7,432.4 675.2,429.9 682.7,437.2 695.6,441 704.1,447.4 712.7,452.8 718.6,456 731.4,457.5 737.8,452.8 748.5,450.2 761.4,449.6 769.9,451.7 778.5,451.7 789.2,449.6 799.9,451.7 810.6,454.9 825.6,454.9 832,452.8 840.3,460.9" fill="none" stroke="#333333" stroke-width="0.9"/>
<rect x="594.4" y="481.7" width="4.3" height="28.3" fill="#0a84ff"/>
<rect x="601.6" y="440.6" width="4.3" height="69.4" fill="#0a84ff"/>
<rect x="608.7" y="446.8" width="4.3" height="63.2" fill="#8e8e8e"/>
<rect x="615.9" y="467.3" width="4.3" height="42.7" fill="#8e8e8e"/>
<rect x="623.1" y="440.4" width="4.3" height="69.6" fill="#0a84ff"/>
<rect x="630.2" y="434.6" width="4.3" height="75.4" fill="#0a84ff"/>
<rect x="637.4" y="434" width="4.3" height="76" fill="#0a84ff"/>
<rect x="644.6" y="402.5" width="4.3" height="107.5" fill="#0a84ff"/>
<rect x="651.7" y="404.2" width="4.3" height="105.8" fill="#8e8e8e"/>
<rect x="658.9" y="420" width="4.3" height="90" fill="#8e8e8e"/>
<rect x="666.1" y="458.8" width="4.3" height="51.2" fill="#8e8e8e"/>
<rect x="673.2" y="451.1" width="4.3" height="58.9" fill="#0a84ff"/>
<rect x="680.4" y="496.6" width="4.3" height="13.4" fill="#8e8e8e"/>
<rect x="687.6" y="451.1" width="4.3" height="58.9" fill="#0a84ff"/>
<rect x="694.8" y="452.1" width="4.3" height="57.9" fill="#8e8e8e"/>
<rect x="701.9" y="449.1" width="4.3" height="60.9" fill="#0a84ff"/>
<rect x="709.1" y="446.4" width="4.3" height="63.6" fill="#0a84ff"/>
<rect x="716.3" y="454.5" width="4.3" height="55.5" fill="#8e8e8e"/>
<rect x="723.4" y="461.8" width="4.3" height="48.2" fill="#8e8e8e"/>
<rect x="730.6" y="456" width="4.3" height="54" fill="#0a84ff"/>
<rect x="737.8" y="454.9" width="4.3" height="55.1" fill="#0a84ff"/>
<rect x="745" y="434.6" width="4.3" height="75.4" fill="#0a84ff"/>
<rect x="752.1" y="443.8" width="4.3" height="66.2" fill="#8e8e8e"/>
<rect x="759.3" y="451.1" width="4.3" height="58.9" fill="#8e8e8e"/>
<rect x="766.5" y="460.7" width="4.3" height="49.3" fill="#8e8e8e"/>
<rect x="773.6" y="455.3" width="4.3" height="54.7" fill="#0a84ff"/>
<rect x="780.8" y="450.2" width="4.3" height="59.8" fill="#0a84ff"/>
<rect x="788" y="452.8" width="4.3" height="57.2" fill="#8e8e8e"/>
<rect x="795.1" y="461.3" width="4.3" height="48.7" fill="#8e8e8e"/>
<rect x="802.3" y="448.5" width="4.3" height="61.5" fill="#0a84ff"/>
<rect x="809.5" y="463" width="4.3" height="47" fill="#8e8e8e"/>
<rect x="816.7" y="453.8" width="4.3" height="56.2" fill="#0a84ff"/>
<rect x="823.8" y="458.3" width="4.3" height="51.7" fill="#8e8e8e"/>
<rect x="831" y="443.1" width="4.3" height="66.9" fill="#0a84ff"/>
<line x1="867" y1="27" x2="867" y2="510.5" stroke="#b0b0b0" stroke-width="1.3"/>
<line x1="867" y1="283" x2="898" y2="283" stroke="#a8a8a8" stroke-width="1"/>
<line x1="867" y1="395" x2="898" y2="395" stroke="#a8a8a8" stroke-width="1"/>
<line x1="867" y1="47.4" x2="869.5" y2="47.4" stroke="#888" stroke-width="0.8"/>
<text x="869.8" y="49.8" font-size="6.8" font-weight="bold" fill="#1a1a1a" stroke="#1a1a1a" stroke-width="0.18">5,800.00</text>
<line x1="867" y1="66.6" x2="869.5" y2="66.6" stroke="#888" stroke-width="0.8"/>
<text x="869.8" y="69" font-size="6.8" font-weight="bold" fill="#1a1a1a" stroke="#1a1a1a" stroke-width="0.18">5,600.00</text>
<line x1="867" y1="104.9" x2="869.5" y2="104.9" stroke="#888" stroke-width="0.8"/>
<text x="869.8" y="107.3" font-size="6.8" font-weight="bold" fill="#1a1a1a" stroke="#1a1a1a" stroke-width="0.18">5,200.00</text>
<line x1="867" y1="124.1" x2="869.5" y2="124.1" stroke="#888" stroke-width="0.8"/>
<text x="869.8" y="126.5" font-size="6.8" font-weight="bold" fill="#1a1a1a" stroke="#1a1a1a" stroke-width="0.18">5,000.00</text>
<line x1="867" y1="143.3" x2="869.5" y2="143.3" stroke="#888" stroke-width="0.8"/>
<text x="869.8" y="145.7" font-size="6.8" font-weight="bold" fill="#1a1a1a" stroke="#1a1a1a" stroke-width="0.18">4,800.00</text>
<line x1="867" y1="162.5" x2="869.5" y2="162.5" stroke="#888" stroke-width="0.8"/>
<text x="869.8" y="164.9" font-size="6.8" font-weight="bold" fill="#1a1a1a" stroke="#1a1a1a" stroke-width="0.18">4,600.00</text>
<line x1="867" y1="181.7" x2="869.5" y2="181.7" stroke="#888" stroke-width="0.8"/>
<text x="869.8" y="184.1" font-size="6.8" font-weight="bold" fill="#1a1a1a" stroke="#1a1a1a" stroke-width="0.18">4,400.00</text>
<line x1="867" y1="200.8" x2="869.5" y2="200.8" stroke="#888" stroke-width="0.8"/>
<text x="869.8" y="203.2" font-size="6.8" font-weight="bold" fill="#1a1a1a" stroke="#1a1a1a" stroke-width="0.18">4,200.00</text>
<line x1="867" y1="220" x2="869.5" y2="220" stroke="#888" stroke-width="0.8"/>
<text x="869.8" y="222.4" font-size="6.8" font-weight="bold" fill="#1a1a1a" stroke="#1a1a1a" stroke-width="0.18">4,000.00</text>
<line x1="867" y1="239.2" x2="869.5" y2="239.2" stroke="#888" stroke-width="0.8"/>
<text x="869.8" y="241.6" font-size="6.8" font-weight="bold" fill="#1a1a1a" stroke="#1a1a1a" stroke-width="0.18">3,800.00</text>
<line x1="867" y1="258.4" x2="869.5" y2="258.4" stroke="#888" stroke-width="0.8"/>
<text x="869.8" y="260.8" font-size="6.8" font-weight="bold" fill="#1a1a1a" stroke="#1a1a1a" stroke-width="0.18">3,600.00</text>
<path d="M866.7,87 L869,83.1 H897.3 V90.9 H869 Z" fill="#f41414"/><text x="869.4" y="89.6" font-size="6.8" font-weight="bold" fill="#fff" textLength="25.6" lengthAdjust="spacingAndGlyphs">5,384.80</text>
<path d="M866.8,202.9 L869,199.1 H897.3 V206.7 H869 Z" fill="#0a0a0a"/><text x="869.5" y="205.4" font-size="6.8" font-weight="bold" fill="#fff" textLength="25.4" lengthAdjust="spacingAndGlyphs">4,174.76</text>
<line x1="867" y1="304" x2="869.5" y2="304" stroke="#888" stroke-width="0.8"/>
<text x="869.8" y="306.4" font-size="6.8" font-weight="bold" fill="#1a1a1a" stroke="#1a1a1a" stroke-width="0.18">250.00</text>
<line x1="867" y1="322.9" x2="869.5" y2="322.9" stroke="#888" stroke-width="0.8"/>
<text x="869.8" y="325.3" font-size="6.8" font-weight="bold" fill="#1a1a1a" stroke="#1a1a1a" stroke-width="0.18">150.00</text>
<line x1="867" y1="341.4" x2="869.5" y2="341.4" stroke="#888" stroke-width="0.8"/>
<text x="869.8" y="343.8" font-size="6.8" font-weight="bold" fill="#1a1a1a" stroke="#1a1a1a" stroke-width="0.18">50.00</text>
<line x1="867" y1="360.3" x2="869.5" y2="360.3" stroke="#888" stroke-width="0.8"/>
<text x="869.8" y="362.7" font-size="6.8" font-weight="bold" fill="#1a1a1a" stroke="#1a1a1a" stroke-width="0.18">-50.00</text>
<path d="M867,378.1 L869,374.5 H897 V381.8 H869 Z" fill="#9a9a9a"/><text x="869.8" y="380.6" font-size="6.8" font-weight="bold" fill="#fff" textLength="21.4" lengthAdjust="spacingAndGlyphs">-146.48</text>
<line x1="867" y1="388.4" x2="869" y2="388.4" stroke="#999" stroke-width="0.7"/>
<line x1="867" y1="379" x2="869" y2="379" stroke="#999" stroke-width="0.7"/>
<line x1="867" y1="369.6" x2="869" y2="369.6" stroke="#999" stroke-width="0.7"/>
<line x1="867" y1="360.2" x2="869" y2="360.2" stroke="#999" stroke-width="0.7"/>
<line x1="867" y1="350.8" x2="869" y2="350.8" stroke="#999" stroke-width="0.7"/>
<line x1="867" y1="341.4" x2="869" y2="341.4" stroke="#999" stroke-width="0.7"/>
<line x1="867" y1="332" x2="869" y2="332" stroke="#999" stroke-width="0.7"/>
<line x1="867" y1="322.6" x2="869" y2="322.6" stroke="#999" stroke-width="0.7"/>
<line x1="867" y1="313.2" x2="869" y2="313.2" stroke="#999" stroke-width="0.7"/>
<line x1="867" y1="303.8" x2="869" y2="303.8" stroke="#999" stroke-width="0.7"/>
<line x1="867" y1="510" x2="869" y2="510" stroke="#999" stroke-width="0.7"/>
<line x1="867" y1="501.9" x2="869" y2="501.9" stroke="#999" stroke-width="0.7"/>
<line x1="867" y1="493.8" x2="869" y2="493.8" stroke="#999" stroke-width="0.7"/>
<line x1="867" y1="485.6" x2="869" y2="485.6" stroke="#999" stroke-width="0.7"/>
<line x1="867" y1="477.5" x2="869" y2="477.5" stroke="#999" stroke-width="0.7"/>
<line x1="867" y1="469.4" x2="869" y2="469.4" stroke="#999" stroke-width="0.7"/>
<line x1="867" y1="461.2" x2="869" y2="461.2" stroke="#999" stroke-width="0.7"/>
<line x1="867" y1="453.1" x2="869" y2="453.1" stroke="#999" stroke-width="0.7"/>
<line x1="867" y1="445" x2="869" y2="445" stroke="#999" stroke-width="0.7"/>
<line x1="867" y1="436.9" x2="869" y2="436.9" stroke="#999" stroke-width="0.7"/>
<line x1="867" y1="428.8" x2="869" y2="428.8" stroke="#999" stroke-width="0.7"/>
<line x1="867" y1="420.6" x2="869" y2="420.6" stroke="#999" stroke-width="0.7"/>
<line x1="867" y1="412.5" x2="869" y2="412.5" stroke="#999" stroke-width="0.7"/>
<line x1="867" y1="404.4" x2="869" y2="404.4" stroke="#999" stroke-width="0.7"/>
<line x1="867" y1="277.6" x2="869" y2="277.6" stroke="#999" stroke-width="0.7"/>
<line x1="867" y1="404.4" x2="869.5" y2="404.4" stroke="#888" stroke-width="0.8"/>
<text x="869.8" y="406.8" font-size="6.8" font-weight="bold" fill="#1a1a1a" stroke="#1a1a1a" stroke-width="0.18">1.30m</text>
<line x1="867" y1="420.6" x2="869.5" y2="420.6" stroke="#888" stroke-width="0.8"/>
<text x="869.8" y="423" font-size="6.8" font-weight="bold" fill="#1a1a1a" stroke="#1a1a1a" stroke-width="0.18">1.10m</text>
<line x1="867" y1="436.9" x2="869.5" y2="436.9" stroke="#888" stroke-width="0.8"/>
<text x="869.8" y="439.3" font-size="6.8" font-weight="bold" fill="#1a1a1a" stroke="#1a1a1a" stroke-width="0.18">0.90m</text>
<line x1="867" y1="453.1" x2="869.5" y2="453.1" stroke="#888" stroke-width="0.8"/>
<text x="869.8" y="455.5" font-size="6.8" font-weight="bold" fill="#1a1a1a" stroke="#1a1a1a" stroke-width="0.18">0.70m</text>
<line x1="867" y1="469.4" x2="869.5" y2="469.4" stroke="#888" stroke-width="0.8"/>
<text x="869.8" y="471.8" font-size="6.8" font-weight="bold" fill="#1a1a1a" stroke="#1a1a1a" stroke-width="0.18">0.50m</text>
<line x1="867" y1="485.6" x2="869.5" y2="485.6" stroke="#888" stroke-width="0.8"/>
<text x="869.8" y="488" font-size="6.8" font-weight="bold" fill="#1a1a1a" stroke="#1a1a1a" stroke-width="0.18">0.30m</text>
<line x1="867" y1="501.9" x2="869.5" y2="501.9" stroke="#888" stroke-width="0.8"/>
<text x="869.8" y="504.3" font-size="6.8" font-weight="bold" fill="#1a1a1a" stroke="#1a1a1a" stroke-width="0.18">0.10m</text>
<path d="M867.3,477.1 L869.5,473.5 H898 V480.7 H869.5 Z" fill="#f01818"/><text x="870.3" y="479.5" font-size="6.8" font-weight="bold" fill="#fff">0.40m</text>
<path d="M867.3,510 L869.5,506.4 H897 V513.6 H869.5 Z" fill="#9a9a9a"/><text x="870.3" y="512.4" font-size="6.8" font-weight="bold" fill="#eee">0.00m</text>
<line x1="30.1" y1="510.5" x2="30.1" y2="512" stroke="#999" stroke-width="0.8"/>
<text x="30.1" y="519.6" font-size="6.8" font-weight="bold" fill="#1a1a1a" stroke="#1a1a1a" stroke-width="0.18" text-anchor="middle">'20</text>
<line x1="58.5" y1="510.5" x2="58.5" y2="512" stroke="#999" stroke-width="0.8"/>
<text x="58.5" y="519.6" font-size="6.8" font-weight="bold" fill="#1a1a1a" stroke="#1a1a1a" stroke-width="0.18" text-anchor="middle">Feb</text>
<line x1="87.4" y1="510.5" x2="87.4" y2="512" stroke="#999" stroke-width="0.8"/>
<text x="87.4" y="519.6" font-size="6.8" font-weight="bold" fill="#1a1a1a" stroke="#1a1a1a" stroke-width="0.18" text-anchor="middle">Mar</text>
<line x1="116.4" y1="510.5" x2="116.4" y2="512" stroke="#999" stroke-width="0.8"/>
<text x="116.4" y="519.6" font-size="6.8" font-weight="bold" fill="#1a1a1a" stroke="#1a1a1a" stroke-width="0.18" text-anchor="middle">Apr</text>
<line x1="144.6" y1="510.5" x2="144.6" y2="512" stroke="#999" stroke-width="0.8"/>
<text x="144.6" y="519.6" font-size="6.8" font-weight="bold" fill="#1a1a1a" stroke="#1a1a1a" stroke-width="0.18" text-anchor="middle">May</text>
<line x1="180.4" y1="510.5" x2="180.4" y2="512" stroke="#999" stroke-width="0.8"/>
<text x="180.4" y="519.6" font-size="6.8" font-weight="bold" fill="#1a1a1a" stroke="#1a1a1a" stroke-width="0.18" text-anchor="middle">Jun</text>
<line x1="209.6" y1="510.5" x2="209.6" y2="512" stroke="#999" stroke-width="0.8"/>
<text x="209.6" y="519.6" font-size="6.8" font-weight="bold" fill="#1a1a1a" stroke="#1a1a1a" stroke-width="0.18" text-anchor="middle">Jul</text>
<line x1="245.5" y1="510.5" x2="245.5" y2="512" stroke="#999" stroke-width="0.8"/>
<text x="245.5" y="519.6" font-size="6.8" font-weight="bold" fill="#1a1a1a" stroke="#1a1a1a" stroke-width="0.18" text-anchor="middle">Aug</text>
<line x1="273.6" y1="510.5" x2="273.6" y2="512" stroke="#999" stroke-width="0.8"/>
<text x="273.6" y="519.6" font-size="6.8" font-weight="bold" fill="#1a1a1a" stroke="#1a1a1a" stroke-width="0.18" text-anchor="middle">Sep</text>
<line x1="302.5" y1="510.5" x2="302.5" y2="512" stroke="#999" stroke-width="0.8"/>
<text x="302.5" y="519.6" font-size="6.8" font-weight="bold" fill="#1a1a1a" stroke="#1a1a1a" stroke-width="0.18" text-anchor="middle">Oct</text>
<line x1="338.8" y1="510.5" x2="338.8" y2="512" stroke="#999" stroke-width="0.8"/>
<text x="338.8" y="519.6" font-size="6.8" font-weight="bold" fill="#1a1a1a" stroke="#1a1a1a" stroke-width="0.18" text-anchor="middle">Nov</text>
<line x1="367.3" y1="510.5" x2="367.3" y2="512" stroke="#999" stroke-width="0.8"/>
<text x="367.3" y="519.6" font-size="6.8" font-weight="bold" fill="#1a1a1a" stroke="#1a1a1a" stroke-width="0.18" text-anchor="middle">Dec</text>
<line x1="395.7" y1="510.5" x2="395.7" y2="512" stroke="#999" stroke-width="0.8"/>
<text x="395.7" y="519.6" font-size="6.8" font-weight="bold" fill="#1a1a1a" stroke="#1a1a1a" stroke-width="0.18" text-anchor="middle">'21</text>
<line x1="431.6" y1="510.5" x2="431.6" y2="512" stroke="#999" stroke-width="0.8"/>
<text x="431.6" y="519.6" font-size="6.8" font-weight="bold" fill="#1a1a1a" stroke="#1a1a1a" stroke-width="0.18" text-anchor="middle">Feb</text>
<line x1="460.4" y1="510.5" x2="460.4" y2="512" stroke="#999" stroke-width="0.8"/>
<text x="460.4" y="519.6" font-size="6.8" font-weight="bold" fill="#1a1a1a" stroke="#1a1a1a" stroke-width="0.18" text-anchor="middle">Mar</text>
<line x1="489.3" y1="510.5" x2="489.3" y2="512" stroke="#999" stroke-width="0.8"/>
<text x="489.3" y="519.6" font-size="6.8" font-weight="bold" fill="#1a1a1a" stroke="#1a1a1a" stroke-width="0.18" text-anchor="middle">Apr</text>
<line x1="524.7" y1="510.5" x2="524.7" y2="512" stroke="#999" stroke-width="0.8"/>
<text x="524.7" y="519.6" font-size="6.8" font-weight="bold" fill="#1a1a1a" stroke="#1a1a1a" stroke-width="0.18" text-anchor="middle">May</text>
<line x1="553.6" y1="510.5" x2="553.6" y2="512" stroke="#999" stroke-width="0.8"/>
<text x="553.6" y="519.6" font-size="6.8" font-weight="bold" fill="#1a1a1a" stroke="#1a1a1a" stroke-width="0.18" text-anchor="middle">Jun</text>
<line x1="582.3" y1="510.5" x2="582.3" y2="512" stroke="#999" stroke-width="0.8"/>
<text x="582.3" y="519.6" font-size="6.8" font-weight="bold" fill="#1a1a1a" stroke="#1a1a1a" stroke-width="0.18" text-anchor="middle">Jul</text>
<line x1="617.9" y1="510.5" x2="617.9" y2="512" stroke="#999" stroke-width="0.8"/>
<text x="617.9" y="519.6" font-size="6.8" font-weight="bold" fill="#1a1a1a" stroke="#1a1a1a" stroke-width="0.18" text-anchor="middle">Aug</text>
<line x1="646.3" y1="510.5" x2="646.3" y2="512" stroke="#999" stroke-width="0.8"/>
<text x="646.3" y="519.6" font-size="6.8" font-weight="bold" fill="#1a1a1a" stroke="#1a1a1a" stroke-width="0.18" text-anchor="middle">Sep</text>
<line x1="675.2" y1="510.5" x2="675.2" y2="512" stroke="#999" stroke-width="0.8"/>
<text x="675.2" y="519.6" font-size="6.8" font-weight="bold" fill="#1a1a1a" stroke="#1a1a1a" stroke-width="0.18" text-anchor="middle">Oct</text>
<line x1="711.1" y1="510.5" x2="711.1" y2="512" stroke="#999" stroke-width="0.8"/>
<text x="711.1" y="519.6" font-size="6.8" font-weight="bold" fill="#1a1a1a" stroke="#1a1a1a" stroke-width="0.18" text-anchor="middle">Nov</text>
<line x1="740" y1="510.5" x2="740" y2="512" stroke="#999" stroke-width="0.8"/>
<text x="740" y="519.6" font-size="6.8" font-weight="bold" fill="#1a1a1a" stroke="#1a1a1a" stroke-width="0.18" text-anchor="middle">Dec</text>
<line x1="775.5" y1="510.5" x2="775.5" y2="512" stroke="#999" stroke-width="0.8"/>
<text x="775.5" y="519.6" font-size="6.8" font-weight="bold" fill="#1a1a1a" stroke="#1a1a1a" stroke-width="0.18" text-anchor="middle">'22</text>
<line x1="804.4" y1="510.5" x2="804.4" y2="512" stroke="#999" stroke-width="0.8"/>
<text x="804.4" y="519.6" font-size="6.8" font-weight="bold" fill="#1a1a1a" stroke="#1a1a1a" stroke-width="0.18" text-anchor="middle">Feb</text>
<line x1="826.1" y1="510.5" x2="826.1" y2="512" stroke="#999" stroke-width="0.8"/>
<text x="826.1" y="519.6" font-size="6.8" font-weight="bold" fill="#1a1a1a" stroke="#1a1a1a" stroke-width="0.18" text-anchor="middle">Mar</text>
<line x1="854.6" y1="510.5" x2="854.6" y2="512" stroke="#999" stroke-width="0.8"/>
<text x="854.6" y="519.6" font-size="6.8" font-weight="bold" fill="#1a1a1a" stroke="#1a1a1a" stroke-width="0.18" text-anchor="middle">Apr</text>
<text x="0" y="34.2" font-size="7.2" font-weight="bold" fill="#111" stroke="#111" stroke-width="0.12" textLength="292.4" lengthAdjust="spacingAndGlyphs">CSI 300 (Shanghai Shenzhen)&#160;&#160;NASDAQ&#160;&#160;+EURO:CSI 300 (SHANGHAI SHENZ* - Weekly&#160;&#160;<tspan fill="#ff1e1e" stroke="#ff1e1e">-3.06%</tspan></text>
<rect x="0" y="521" width="898" height="5" fill="#373c48"/><rect x="0" y="521" width="5" height="5" fill="#9aa3b3"/><rect x="883" y="521" width="10.2" height="5" fill="#c5cad4"/><rect x="893.2" y="521" width="4.8" height="5" fill="#8593a8"/>
<rect x="0" y="526" width="898" height="16" fill="#141519"/>
<path d="M2.2,532 h1.2 v4.4 h-1.2 z M6.7,532 L3.4,534.2 L6.7,536.4 Z M14.7,532 L11.4,534.2 L14.7,536.4 Z M19.7,532 L23,534.2 L19.7,536.4 Z M27,532 L30.3,534.2 L27,536.4 Z M30.6,532 h1.2 v4.4 h-1.2 z" fill="#62646b"/>
<path d="M143.5,526.8 L167,526.8 L167,541 L147,541 Z" fill="#8d97a8"/>
<line x1="33.7" y1="526.5" x2="37.2" y2="540.5" stroke="#3a3d45" stroke-width="0.9"/>
<line x1="84.8" y1="526.5" x2="88.3" y2="540.5" stroke="#3a3d45" stroke-width="0.9"/>
<line x1="143.5" y1="526.5" x2="147" y2="540.5" stroke="#3a3d45" stroke-width="0.9"/>
<line x1="167" y1="526.5" x2="170.5" y2="540.5" stroke="#3a3d45" stroke-width="0.9"/>
<line x1="225.2" y1="526.5" x2="228.7" y2="540.5" stroke="#3a3d45" stroke-width="0.9"/>
<line x1="283" y1="526.5" x2="286.5" y2="540.5" stroke="#3a3d45" stroke-width="0.9"/>
<line x1="321" y1="526.5" x2="324.5" y2="540.5" stroke="#3a3d45" stroke-width="0.9"/>
<line x1="348" y1="526.5" x2="351.5" y2="540.5" stroke="#3a3d45" stroke-width="0.9"/>
<line x1="410.5" y1="526.5" x2="414" y2="540.5" stroke="#3a3d45" stroke-width="0.9"/>
<line x1="452.2" y1="526.5" x2="455.7" y2="540.5" stroke="#3a3d45" stroke-width="0.9"/>
<line x1="470.6" y1="526.5" x2="474.1" y2="540.5" stroke="#3a3d45" stroke-width="0.9"/>
<line x1="507.4" y1="526.5" x2="510.9" y2="540.5" stroke="#3a3d45" stroke-width="0.9"/>
<text x="39" y="536.6" font-size="7.2" fill="#a9b1bf" textLength="43" lengthAdjust="spacingAndGlyphs">Trade Manager</text>
<text x="88" y="536.6" font-size="7.2" fill="#a9b1bf" textLength="55.3" lengthAdjust="spacingAndGlyphs">Help Strategy (US)</text>
<text x="148.5" y="536.6" font-size="7.2" fill="#262b36" textLength="16.4" lengthAdjust="spacingAndGlyphs">Wilde</text>
<text x="170.7" y="536.6" font-size="7.2" fill="#a9b1bf" textLength="52.8" lengthAdjust="spacingAndGlyphs">Way of the Trader</text>
<text x="229" y="536.6" font-size="7.2" fill="#a9b1bf" textLength="53" lengthAdjust="spacingAndGlyphs">Help Daily Weekly</text>
<text x="287.4" y="536.6" font-size="7.2" fill="#a9b1bf" textLength="32.6" lengthAdjust="spacingAndGlyphs">MA X-Over</text>
<text x="325.3" y="536.6" font-size="7.2" fill="#a9b1bf" textLength="20.7" lengthAdjust="spacingAndGlyphs">eMini's</text>
<text x="351.8" y="536.6" font-size="7.2" fill="#a9b1bf" textLength="55.6" lengthAdjust="spacingAndGlyphs">Composite Help US</text>
<text x="413.5" y="536.6" font-size="7.2" fill="#a9b1bf" textLength="35.5" lengthAdjust="spacingAndGlyphs">Help X-Over</text>
<text x="454.7" y="536.6" font-size="7.2" fill="#a9b1bf" textLength="13.3" lengthAdjust="spacingAndGlyphs">Tidal</text>
<text x="474.3" y="536.6" font-size="7.2" fill="#a9b1bf" textLength="30.4" lengthAdjust="spacingAndGlyphs">US Indices</text>
<text x="511" y="536.6" font-size="7.2" fill="#a9b1bf" textLength="9.9" lengthAdjust="spacingAndGlyphs">VIX</text>
<rect x="524" y="528" width="12.6" height="12.5" fill="#2a2d35"/><text x="527.6" y="537.3" font-size="8" fill="#b8bcc6">+</text>
<rect x="0" y="542" width="898" height="19" fill="#1f2023"/>
<rect x="117" y="542" width="22.2" height="19" fill="#404247"/>
<path d="M6,547.5 L10.6,546.8 V551.2 H6 Z M11.3,546.7 L16.2,546 V551.2 H11.3 Z M6,551.9 H10.6 V556.3 L6,555.6 Z M11.3,551.9 H16.2 V557.1 L11.3,556.4 Z" fill="#f2f2f2"/>
<circle cx="35.5" cy="551.3" r="4.7" fill="#ff7a1a"/><circle cx="35.8" cy="551.6" r="2.6" fill="#7b3fe4"/><path d="M33,547 q3,-2 6,1 q-2,-0.5 -3,0.5z" fill="#ffcc33"/>
<circle cx="58.8" cy="551.3" r="4.7" fill="#db4437"/><path d="M58.8,551.3 L54.3,549.9 A4.7,4.7 0 0 0 57,555.6 Z" fill="#0f9d58"/><path d="M58.8,551.3 L57,555.6 A4.7,4.7 0 0 0 63.5,551 Z" fill="#f4c20d"/><circle cx="58.8" cy="551.3" r="2" fill="#fff"/><circle cx="58.8" cy="551.3" r="1.5" fill="#4285f4"/>
<circle cx="81.8" cy="551.3" r="5" fill="#1a82dc"/><path d="M76.9,550.2 A5,5 0 0 1 86.8,550.6 Q86.4,552.6 84,552.6 Q82,552.6 81.6,551.2 Q80,549.4 76.9,550.2 Z" fill="#4cc46a"/><circle cx="82.2" cy="552.6" r="1.9" fill="#1f2023"/>
<path d="M107.8,546.6 Q103,547 101.6,552 Q100.8,556 103.6,556.6 Q102.6,553.5 104.6,550 Q106,548 107.8,546.6 Z" fill="#4a56d8"/><path d="M107.8,546.6 Q109.6,549 107.6,553.2 Q106,556 103.6,556.6 Q106.4,553 106.8,550 Z" fill="#2f7ee8"/>
<path d="M122.6,547.6 L133.2,546.4 Q132.6,548.8 130,549.3 L123.2,549.9 Z" fill="#1ea6e0"/><path d="M128.8,550.3 Q130.4,553.4 125.6,557 Q125.6,553 128.8,550.3 Z" fill="#1fc8d8"/><path d="M123.2,549.9 Q125,551 125.4,552.6 L126.6,550.8 Z" fill="#1a8fd8"/>
<rect x="145.6" y="546.6" width="9.4" height="9.6" rx="0.8" fill="#f4f4f4"/><path d="M151.6,548 Q148,550 148.6,553.2 Q149.4,555.2 151.6,554.2 Q152.6,553 151.4,551.8 Q150.2,551.4 149.6,552.4 Q149.8,550 151.6,548 Z" fill="#e0141e"/>
<rect x="171" y="546.3" width="7.6" height="10" rx="0.6" fill="#2a7de6"/><rect x="171" y="546.3" width="7.6" height="3.4" fill="#41a5ee"/><rect x="168.4" y="548.8" width="6" height="5.8" rx="0.4" fill="#1a5cc0"/><text x="169.1" y="553.6" font-size="4.8" font-weight="bold" fill="#fff">W</text>
<path d="M191.8,547.6 h4 l1,1 h5.4 v7.8 h-10.4 z" fill="#f6c230"/><rect x="191.8" y="550" width="10.4" height="6.4" fill="#ffd84a"/><rect x="194.6" y="552.6" width="4.8" height="3.8" fill="#2f8ae0"/>
<rect x="27" y="559.6" width="17.1" height="1.4" fill="#9fd3f5"/>
<rect x="117" y="559.6" width="22.2" height="1.4" fill="#9fd3f5"/>
<rect x="141.8" y="559.6" width="18.5" height="1.4" fill="#9fd3f5"/>
<rect x="165" y="559.6" width="18.5" height="1.4" fill="#9fd3f5"/>
<rect x="188" y="559.6" width="18" height="1.4" fill="#9fd3f5"/>
<path d="M702,554 L705.7,550 L709.4,554" stroke="#e0e0e0" stroke-width="0.9" fill="none"/>
<rect x="717" y="547.5" width="5" height="7" rx="1" stroke="#ddd" stroke-width="0.8" fill="none"/><rect x="721.5" y="549.5" width="2.2" height="3" fill="#ddd"/>
<path d="M730.5,550 h2 l3,-2.5 v9 l-3,-2.5 h-2 z M737.5,549.5 q1.5,2.5 0,5 M739.5,548 q2.5,4 0,8" stroke="#ddd" stroke-width="0.8" fill="none"/>
<path d="M745.5,555 h10 a2.5,2.5 0 0 0 -1,-4.8 a3.5,3.5 0 0 0 -6.5,0.3 a2.3,2.3 0 0 0 -2.5,4.5z" fill="#e0e0e0"/>
<rect x="761" y="547.5" width="10" height="6" stroke="#ddd" stroke-width="0.8" fill="none"/><path d="M766,553.5 v2.5 M763,556.3 h6" stroke="#ddd" stroke-width="0.8"/>
<rect x="775" y="549" width="10" height="6" stroke="#ddd" stroke-width="0.8" fill="#ddd" fill-opacity="0.4"/><rect x="776" y="550" width="5" height="4" fill="#e6e6e6"/>
<rect x="793" y="547" width="4.2" height="9.5" rx="1" stroke="#ddd" stroke-width="0.8" fill="none"/><path d="M797.5,556.5 l2,-2" stroke="#ddd" stroke-width="0.8"/>
<text x="807" y="554.6" font-size="7.4" fill="#e0e0e0">ENG</text>
<text x="831.3" y="554.6" font-size="7.4" fill="#e0e0e0">5:41 AM</text>
<path d="M872,547 h11.2 v7.5 h-4.5 l-1.8,2 l-1.8,-2 h-3.1 z" stroke="#e0e0e0" stroke-width="0.9" fill="none"/>
<line x1="895.3" y1="543" x2="895.3" y2="561" stroke="#8a8a8a" stroke-width="0.8"/>
</svg></body></html>
